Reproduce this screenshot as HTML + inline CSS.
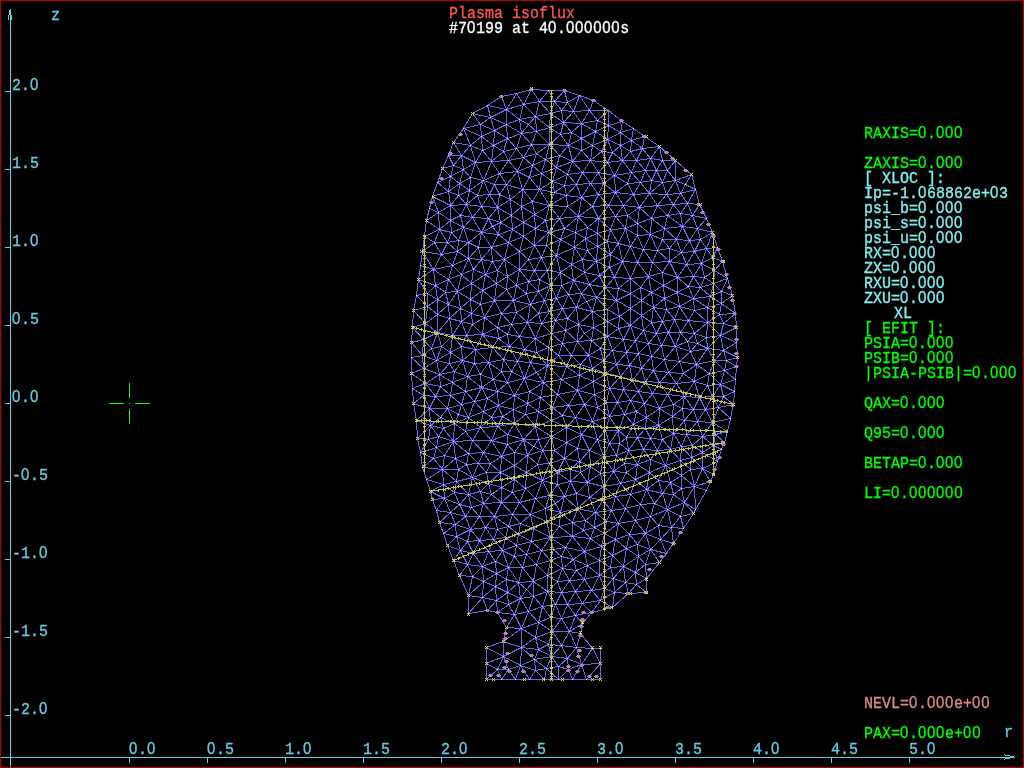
<!DOCTYPE html><html><head><meta charset="utf-8"><style>
html,body{margin:0;padding:0;background:#000;width:1024px;height:768px;overflow:hidden}
.t{position:absolute;font:15px/15px "Liberation Mono",monospace;white-space:pre;transform:scaleY(1.11);transform-origin:0 0;will-change:transform;-webkit-text-stroke:0.3px currentColor}
svg{position:absolute;left:0;top:0}
.t b{font-family:"Liberation Sans",sans-serif;font-weight:normal;letter-spacing:0.66px;line-height:0}
</style></head><body>
<svg width="1024" height="768" shape-rendering="crispEdges">
<rect x="0" y="0" width="1024" height="1" fill="#b40000"/>
<rect x="0" y="767" width="1024" height="1" fill="#b40000"/>
<rect x="0" y="0" width="1" height="768" fill="#b40000"/>
<rect x="1023" y="0" width="1" height="768" fill="#b40000"/>
<rect x="10" y="9" width="1" height="758" fill="#66cce4"/>
<rect x="9" y="10" width="1" height="5" fill="#66cce4"/>
<rect x="8" y="15" width="1" height="5" fill="#66cce4"/>
<rect x="11" y="15" width="1" height="5" fill="#66cce4"/>
<rect x="1" y="757" width="1014" height="1" fill="#66cce4"/>
<rect x="1005" y="755" width="5" height="1" fill="#66cce4"/>
<rect x="1005" y="758" width="5" height="1" fill="#66cce4"/>
<rect x="1010" y="756" width="4" height="1" fill="#66cce4"/>
<rect x="1004" y="754" width="1" height="1" fill="#66cce4"/>
<rect x="1004" y="759" width="1" height="1" fill="#66cce4"/>
<rect x="5" y="91" width="5" height="1" fill="#66cce4"/>
<rect x="5" y="169" width="5" height="1" fill="#66cce4"/>
<rect x="5" y="247" width="5" height="1" fill="#66cce4"/>
<rect x="5" y="325" width="5" height="1" fill="#66cce4"/>
<rect x="5" y="403" width="5" height="1" fill="#66cce4"/>
<rect x="5" y="481" width="5" height="1" fill="#66cce4"/>
<rect x="5" y="559" width="5" height="1" fill="#66cce4"/>
<rect x="5" y="637" width="5" height="1" fill="#66cce4"/>
<rect x="5" y="715" width="5" height="1" fill="#66cce4"/>
<rect x="129" y="758" width="1" height="5" fill="#66cce4"/>
<rect x="207" y="758" width="1" height="5" fill="#66cce4"/>
<rect x="285" y="758" width="1" height="5" fill="#66cce4"/>
<rect x="363" y="758" width="1" height="5" fill="#66cce4"/>
<rect x="441" y="758" width="1" height="5" fill="#66cce4"/>
<rect x="519" y="758" width="1" height="5" fill="#66cce4"/>
<rect x="597" y="758" width="1" height="5" fill="#66cce4"/>
<rect x="675" y="758" width="1" height="5" fill="#66cce4"/>
<rect x="753" y="758" width="1" height="5" fill="#66cce4"/>
<rect x="831" y="758" width="1" height="5" fill="#66cce4"/>
<rect x="909" y="758" width="1" height="5" fill="#66cce4"/>
<rect x="129" y="383" width="1" height="15" fill="#00ff00"/>
<rect x="129" y="409" width="1" height="15" fill="#00ff00"/>
<rect x="109" y="403" width="15" height="1" fill="#00ff00"/>
<rect x="135" y="403" width="15" height="1" fill="#00ff00"/>
<rect x="129" y="403" width="1" height="1" fill="#00ff00"/>
<path d="M574.5 247.5L585.5 238.5M460.5 215.5L466.5 204.5M508.5 567.5L496.5 573.5M620.5 376.5L632.5 380.5M448.5 155.5L453.5 165.5M507.5 276.5L506.5 289.5M482.5 150.5L493.5 145.5M637.5 437.5L626.5 437.5M568.5 405.5L552.5 407.5M644.5 136.5L659.5 146.5M666.5 553.5L659.5 562.5M455.5 458.5L458.5 469.5M552.5 631.5L538.5 622.5M471.5 283.5L485.5 274.5M494.5 300.5L496.5 283.5M461.5 346.5L450.5 352.5M648.5 343.5L661.5 345.5M630.5 278.5L622.5 261.5M487.5 610.5L496.5 600.5M481.5 259.5L485.5 274.5M514.5 423.5L513.5 409.5M603.5 456.5L609.5 443.5M659.5 562.5L646.5 578.5M463.5 169.5L450.5 176.5M439.5 522.5L436.5 510.5M435.5 285.5L437.5 299.5M652.5 393.5L638.5 391.5M646.5 578.5L635.5 572.5M458.5 195.5L448.5 191.5M525.5 414.5L513.5 409.5M593.5 100.5L589.5 110.5M559.5 526.5L572.5 536.5M436.5 510.5L432.5 499.5M448.5 155.5L461.5 155.5M648.5 343.5L635.5 340.5M633.5 424.5L626.5 437.5M581.5 197.5L567.5 206.5M412.5 327.5L423.5 339.5M440.5 386.5L439.5 374.5M694.5 333.5L680.5 332.5M520.5 598.5L526.5 589.5M603.5 183.5L615.5 192.5M572.5 522.5L560.5 512.5M536.5 372.5L543.5 382.5M547.5 575.5L550.5 560.5M605.5 287.5L596.5 297.5M496.5 573.5L482.5 566.5M559.5 526.5L546.5 521.5M457.5 251.5L468.5 258.5M593.5 327.5L591.5 340.5M717.5 461.5L713.5 445.5M624.5 463.5L613.5 471.5M626.5 548.5L612.5 555.5M503.5 656.5L520.5 665.5M693.5 409.5L682.5 408.5M533.5 581.5L522.5 567.5M584.5 404.5L575.5 417.5M650.5 459.5L657.5 450.5M578.5 324.5L576.5 307.5M594.5 527.5L595.5 512.5M488.5 483.5L486.5 472.5M497.5 327.5L507.5 334.5M411.5 373.5L423.5 368.5M604.5 533.5L590.5 538.5M485.5 274.5L473.5 269.5M461.5 321.5L460.5 308.5M564.5 185.5L576.5 184.5M452.5 335.5L437.5 332.5M596.5 261.5L584.5 272.5M498.5 405.5L502.5 416.5M511.5 371.5L524.5 378.5M530.5 514.5L535.5 498.5M673.5 204.5L666.5 194.5M488.5 551.5L495.5 561.5M573.5 559.5L562.5 568.5M483.5 180.5L469.5 190.5M630.5 246.5L643.5 249.5M508.5 242.5L491.5 247.5M593.5 327.5L584.5 333.5M461.5 404.5L458.5 414.5M558.5 666.5L568.5 669.5M507.5 592.5L518.5 582.5M575.5 591.5L567.5 604.5M712.5 232.5L706.5 248.5M641.5 315.5L643.5 330.5M538.5 649.5L534.5 659.5M492.5 347.5L475.5 349.5M526.5 472.5L525.5 488.5M542.5 606.5L528.5 611.5M494.5 300.5L484.5 317.5M561.5 110.5L550.5 113.5M648.5 343.5L638.5 353.5M607.5 336.5L623.5 339.5M546.5 668.5L534.5 659.5M603.5 486.5L615.5 496.5M588.5 355.5L591.5 340.5M465.5 391.5L481.5 387.5M474.5 363.5L488.5 362.5M483.5 411.5L491.5 417.5M608.5 205.5L615.5 192.5M498.5 234.5L481.5 232.5M581.5 664.5L576.5 647.5M535.5 498.5L525.5 488.5M564.5 496.5L555.5 503.5M508.5 526.5L518.5 534.5M472.5 217.5L481.5 206.5M585.5 520.5L583.5 530.5M461.5 321.5L472.5 324.5M693.5 298.5L700.5 287.5M620.5 483.5L635.5 479.5M541.5 173.5L529.5 177.5M723.5 323.5L719.5 314.5M550.5 537.5L559.5 526.5M572.5 161.5L582.5 172.5M530.5 514.5L520.5 523.5M630.5 325.5L618.5 328.5M452.5 265.5L441.5 254.5M470.5 529.5L479.5 516.5M581.5 150.5L592.5 145.5M497.5 207.5L489.5 194.5M533.5 581.5L526.5 589.5M532.5 201.5L522.5 189.5M494.5 130.5L481.5 136.5M680.5 332.5L674.5 319.5M596.5 261.5L610.5 254.5M568.5 669.5L567.5 658.5M508.5 160.5L503.5 151.5M587.5 565.5L573.5 559.5M519.5 336.5L509.5 346.5M677.5 292.5L664.5 298.5M675.5 160.5L691.5 174.5M645.5 533.5L660.5 539.5M630.5 308.5L641.5 315.5M440.5 386.5L425.5 383.5M674.5 319.5L668.5 332.5M502.5 550.5L516.5 545.5M549.5 127.5L549.5 144.5M684.5 420.5L697.5 421.5M552.5 631.5L550.5 617.5M651.5 292.5L648.5 276.5M508.5 242.5L504.5 259.5M433.5 269.5L441.5 254.5M646.5 592.5L628.5 593.5M504.5 259.5L497.5 270.5M519.5 119.5L523.5 104.5M673.5 543.5L671.5 527.5M615.5 496.5L611.5 510.5M552.5 407.5L562.5 415.5M470.5 299.5L457.5 291.5M466.5 335.5L461.5 346.5M646.5 578.5L636.5 584.5M586.5 301.5L581.5 293.5M457.5 251.5L458.5 240.5M487.5 105.5L490.5 117.5M431.5 348.5L423.5 339.5M450.5 352.5L462.5 360.5M430.5 491.5L426.5 479.5M461.5 155.5L475.5 162.5M668.5 372.5L676.5 383.5M694.5 381.5L684.5 396.5M546.5 521.5L533.5 528.5M471.5 283.5L457.5 291.5M547.5 365.5L548.5 347.5M650.5 459.5L649.5 472.5M435.5 285.5L427.5 293.5M454.5 371.5L452.5 382.5M488.5 362.5L475.5 349.5M526.5 293.5L528.5 281.5M652.5 262.5L643.5 249.5M652.5 262.5L657.5 250.5M545.5 508.5L549.5 495.5M664.5 359.5L661.5 345.5M534.5 270.5L528.5 259.5M533.5 581.5L533.5 596.5M482.5 597.5L496.5 600.5M497.5 529.5L505.5 537.5M591.5 590.5L600.5 600.5M693.5 409.5L684.5 396.5M480.5 427.5L491.5 417.5M508.5 160.5L499.5 173.5M566.5 195.5L549.5 205.5M733.5 404.5L723.5 396.5M521.5 647.5L534.5 659.5M475.5 162.5L470.5 145.5M603.5 486.5L620.5 483.5M635.5 572.5L638.5 556.5M507.5 382.5L511.5 371.5M673.5 433.5L684.5 420.5M483.5 180.5L475.5 162.5M620.5 145.5L612.5 152.5M707.5 322.5L723.5 323.5M591.5 612.5L575.5 615.5M497.5 612.5L514.5 614.5M548.5 347.5L562.5 343.5M574.5 247.5L571.5 264.5M460.5 215.5L463.5 227.5M550.5 560.5L561.5 556.5M717.5 247.5L722.5 261.5M606.5 521.5L604.5 533.5M592.5 421.5L581.5 434.5M548.5 347.5L551.5 333.5M557.5 484.5L557.5 472.5M493.5 539.5L479.5 540.5M443.5 428.5L454.5 423.5M633.5 128.5L631.5 140.5M600.5 600.5L614.5 592.5M592.5 648.5L600.5 648.5M523.5 222.5L512.5 229.5M542.5 480.5L549.5 463.5M640.5 504.5L654.5 503.5M426.5 479.5L442.5 469.5M675.5 160.5L675.5 180.5M592.5 421.5L609.5 416.5M600.5 648.5L600.5 663.5M668.5 372.5L683.5 373.5M673.5 494.5L681.5 488.5M508.5 526.5L494.5 516.5M413.5 403.5L412.5 388.5M491.5 247.5L481.5 232.5M630.5 278.5L618.5 288.5M511.5 324.5L507.5 334.5M650.5 438.5L637.5 437.5M473.5 553.5L482.5 566.5M455.5 458.5L444.5 455.5M501.5 502.5L494.5 516.5M618.5 243.5L607.5 241.5M412.5 388.5L411.5 373.5M477.5 195.5L481.5 206.5M565.5 547.5L573.5 559.5M560.5 272.5L561.5 285.5M715.5 434.5L712.5 422.5M639.5 207.5L627.5 215.5M558.5 355.5L562.5 343.5M503.5 359.5L501.5 371.5M466.5 335.5L461.5 321.5M449.5 318.5L437.5 332.5M534.5 245.5L523.5 236.5M657.5 450.5L662.5 439.5M517.5 171.5L529.5 177.5M577.5 341.5L591.5 340.5M560.5 239.5L575.5 232.5M645.5 533.5L635.5 520.5M558.5 679.5L558.5 666.5M490.5 117.5L480.5 124.5M468.5 453.5L455.5 458.5M582.5 603.5L567.5 604.5M578.5 324.5L567.5 318.5M527.5 322.5L511.5 324.5M690.5 351.5L697.5 343.5M514.5 452.5L527.5 455.5M441.5 346.5L436.5 360.5M648.5 343.5L656.5 333.5M662.5 321.5L666.5 309.5M525.5 414.5L527.5 403.5M596.5 261.5L587.5 250.5M451.5 232.5L447.5 242.5M495.5 586.5L483.5 581.5M447.5 408.5L458.5 414.5M572.5 522.5L585.5 520.5M673.5 433.5L658.5 425.5M606.5 373.5L603.5 360.5M442.5 469.5L433.5 458.5M542.5 480.5L525.5 488.5M567.5 174.5L556.5 167.5M425.5 383.5L435.5 396.5M641.5 315.5L641.5 300.5M460.5 215.5L450.5 220.5M638.5 556.5L650.5 549.5M452.5 265.5L461.5 274.5M706.5 218.5L697.5 228.5M578.5 216.5L598.5 218.5M657.5 250.5L643.5 249.5M687.5 341.5L697.5 343.5M564.5 458.5L554.5 450.5M585.5 520.5L595.5 512.5M465.5 391.5L450.5 395.5M572.5 536.5L583.5 530.5M453.5 142.5L461.5 155.5M467.5 541.5L479.5 540.5M643.5 330.5L630.5 325.5M717.5 461.5L702.5 452.5M508.5 567.5L506.5 579.5M600.5 348.5L591.5 340.5M721.5 303.5L721.5 291.5M657.5 205.5L667.5 215.5M521.5 628.5L521.5 647.5M585.5 238.5L597.5 246.5M578.5 216.5L575.5 232.5M608.5 205.5L598.5 218.5M707.5 322.5L719.5 314.5M688.5 320.5L680.5 332.5M684.5 396.5L682.5 408.5M506.5 289.5L513.5 300.5M564.5 185.5L552.5 181.5M620.5 376.5L616.5 364.5M549.5 127.5L550.5 113.5M658.5 425.5L659.5 408.5M552.5 631.5L569.5 631.5M521.5 628.5L538.5 622.5M690.5 469.5L691.5 457.5M618.5 243.5L630.5 246.5M607.5 336.5L591.5 340.5M525.5 414.5L538.5 411.5M651.5 356.5L653.5 370.5M508.5 604.5L507.5 592.5M603.5 486.5L587.5 482.5M501.5 502.5L501.5 487.5M539.5 101.5L550.5 113.5M463.5 128.5L470.5 145.5M619.5 316.5L630.5 325.5M459.5 183.5L450.5 176.5M608.5 110.5L608.5 125.5M565.5 330.5L567.5 318.5M606.5 373.5L593.5 381.5M488.5 551.5L482.5 566.5M449.5 318.5L437.5 314.5M717.5 247.5L712.5 257.5M561.5 110.5L554.5 101.5M517.5 171.5L506.5 184.5M571.5 355.5L580.5 364.5M589.5 284.5L581.5 293.5M649.5 193.5L640.5 182.5M564.5 90.5L554.5 101.5M584.5 579.5L569.5 580.5M613.5 471.5L616.5 455.5M623.5 205.5L627.5 215.5M428.5 439.5L436.5 447.5M447.5 408.5L454.5 423.5M511.5 215.5L500.5 222.5M483.5 452.5L501.5 456.5M516.5 545.5L505.5 537.5M448.5 191.5L450.5 176.5M727.5 278.5L732.5 295.5M467.5 541.5L460.5 550.5M656.5 170.5L662.5 182.5M536.5 352.5L548.5 347.5M501.5 487.5L512.5 492.5M565.5 547.5L553.5 549.5M508.5 567.5L495.5 561.5M624.5 463.5L616.5 455.5M507.5 138.5L521.5 133.5M450.5 512.5L465.5 516.5M727.5 278.5L721.5 291.5M481.5 136.5L480.5 124.5M628.5 450.5L637.5 437.5M531.5 144.5L549.5 144.5M584.5 551.5L590.5 538.5M712.5 422.5L697.5 421.5M551.5 333.5L562.5 343.5M659.5 408.5L673.5 404.5M548.5 644.5L538.5 649.5M507.5 592.5L495.5 586.5M547.5 365.5L536.5 352.5M588.5 355.5L580.5 364.5M538.5 291.5L550.5 285.5M651.5 292.5L653.5 307.5M702.5 436.5L715.5 434.5M487.5 105.5L501.5 96.5M625.5 582.5L636.5 584.5M627.5 183.5L615.5 192.5M473.5 553.5L479.5 540.5M431.5 348.5L436.5 360.5M411.5 357.5L411.5 342.5M582.5 603.5L575.5 615.5M557.5 581.5L562.5 568.5M638.5 556.5L645.5 564.5M514.5 556.5L508.5 567.5M480.5 304.5L470.5 299.5M692.5 445.5L686.5 434.5M597.5 233.5L598.5 218.5M523.5 104.5L539.5 101.5M630.5 400.5L617.5 402.5M650.5 158.5L662.5 160.5M534.5 270.5L539.5 279.5M547.5 270.5L560.5 272.5M497.5 327.5L484.5 317.5M470.5 177.5L483.5 180.5M448.5 279.5L445.5 292.5M664.5 228.5L667.5 215.5M680.5 193.5L685.5 184.5M531.5 89.5L516.5 93.5M545.5 508.5L560.5 512.5M650.5 459.5L665.5 465.5M598.5 218.5L615.5 216.5M613.5 471.5L626.5 472.5M659.5 382.5L645.5 381.5M603.5 456.5L589.5 450.5M722.5 261.5L714.5 270.5M514.5 452.5L501.5 456.5M628.5 450.5L619.5 443.5M516.5 148.5L523.5 157.5M528.5 611.5L538.5 622.5M519.5 119.5L506.5 109.5M690.5 469.5L694.5 486.5M694.5 251.5L700.5 239.5M594.5 527.5L585.5 520.5M566.5 195.5L567.5 206.5M555.5 320.5L565.5 330.5M448.5 279.5L435.5 285.5M638.5 353.5L635.5 340.5M547.5 365.5L558.5 355.5M702.5 452.5L702.5 468.5M624.5 463.5L626.5 472.5M472.5 217.5L488.5 218.5M575.5 591.5L569.5 580.5M628.5 450.5L626.5 437.5M587.5 227.5L578.5 216.5M577.5 508.5L576.5 493.5M514.5 479.5L514.5 465.5M607.5 309.5L616.5 300.5M565.5 547.5L572.5 536.5M454.5 423.5L458.5 414.5M735.5 379.5L734.5 391.5M478.5 463.5L468.5 453.5M565.5 547.5L584.5 551.5M576.5 570.5L573.5 559.5M668.5 372.5L664.5 359.5M482.5 334.5L475.5 349.5M473.5 553.5L460.5 550.5M447.5 545.5L456.5 536.5M662.5 182.5L651.5 180.5M630.5 278.5L648.5 276.5M533.5 581.5L518.5 582.5M530.5 514.5L533.5 528.5M519.5 269.5L516.5 285.5M622.5 261.5L610.5 254.5M585.5 238.5L597.5 233.5M542.5 480.5L549.5 495.5M561.5 618.5L567.5 604.5M538.5 313.5L544.5 300.5M659.5 562.5L645.5 564.5M619.5 316.5L607.5 309.5M468.5 453.5L472.5 440.5M416.5 295.5L427.5 306.5M577.5 341.5L565.5 330.5M456.5 536.5L460.5 550.5M623.5 205.5L639.5 207.5M603.5 456.5L613.5 471.5M707.5 322.5L707.5 307.5M659.5 408.5L672.5 416.5M627.5 183.5L631.5 172.5M651.5 322.5L653.5 307.5M626.5 352.5L612.5 350.5M456.5 536.5L455.5 524.5M635.5 572.5L636.5 584.5M541.5 173.5L539.5 189.5M612.5 555.5L623.5 566.5M449.5 318.5L448.5 304.5M609.5 388.5L617.5 402.5M500.5 472.5L501.5 456.5M482.5 290.5L485.5 274.5M465.5 391.5L452.5 382.5M577.5 341.5L588.5 355.5M488.5 218.5L481.5 232.5M662.5 493.5L673.5 494.5M503.5 641.5L521.5 647.5M627.5 183.5L614.5 175.5M568.5 294.5L576.5 307.5M696.5 364.5L690.5 351.5M604.5 588.5L591.5 590.5M488.5 551.5L479.5 540.5M508.5 604.5L520.5 598.5M486.5 472.5L472.5 477.5M604.5 588.5L613.5 578.5M675.5 180.5L666.5 194.5M679.5 306.5L694.5 310.5M507.5 592.5L520.5 598.5M644.5 136.5L631.5 140.5M470.5 529.5L479.5 540.5M622.5 121.5L633.5 128.5M577.5 508.5L572.5 522.5M453.5 165.5L450.5 176.5M706.5 248.5L701.5 263.5M453.5 441.5L436.5 447.5M497.5 426.5L491.5 417.5M657.5 250.5L650.5 234.5M622.5 160.5L620.5 145.5M673.5 543.5L666.5 553.5M606.5 521.5L595.5 512.5M572.5 161.5L567.5 174.5M667.5 509.5L654.5 503.5M684.5 502.5L680.5 516.5M610.5 254.5L607.5 241.5M605.5 430.5L609.5 443.5M443.5 533.5L439.5 522.5M620.5 145.5L607.5 139.5M590.5 466.5L587.5 482.5M597.5 120.5L608.5 125.5M549.5 144.5L536.5 131.5M517.5 361.5L524.5 378.5M573.5 111.5L567.5 102.5M635.5 572.5L645.5 564.5M577.5 390.5L557.5 394.5M497.5 426.5L502.5 416.5M494.5 130.5L507.5 138.5M531.5 541.5L516.5 545.5M681.5 252.5L689.5 240.5M577.5 508.5L595.5 512.5M600.5 348.5L588.5 355.5M555.5 320.5L567.5 318.5M538.5 291.5L528.5 281.5M620.5 376.5L609.5 388.5M591.5 612.5L582.5 603.5M498.5 405.5L513.5 409.5M598.5 194.5L603.5 183.5M431.5 348.5L437.5 332.5M609.5 416.5L618.5 430.5M536.5 564.5L526.5 554.5M482.5 290.5L480.5 304.5M542.5 606.5L550.5 617.5M449.5 318.5L460.5 308.5M643.5 449.5L637.5 464.5M578.5 324.5L592.5 311.5M439.5 374.5L449.5 363.5M523.5 104.5L506.5 109.5M466.5 335.5L482.5 334.5M603.5 486.5L602.5 500.5M429.5 408.5L447.5 408.5M651.5 356.5L661.5 345.5M532.5 201.5L549.5 205.5M695.5 189.5L699.5 204.5M470.5 529.5L455.5 524.5M568.5 145.5L571.5 132.5M428.5 439.5L430.5 425.5M584.5 404.5L597.5 407.5M545.5 159.5L536.5 153.5M597.5 120.5L581.5 123.5M637.5 437.5L645.5 428.5M626.5 548.5L629.5 534.5M488.5 483.5L472.5 477.5M511.5 371.5L501.5 371.5M699.5 204.5L706.5 218.5M475.5 349.5L462.5 360.5M612.5 607.5L591.5 612.5M457.5 251.5L468.5 242.5M481.5 387.5L487.5 398.5M461.5 155.5L463.5 169.5M712.5 232.5L697.5 228.5M568.5 145.5L560.5 134.5M453.5 560.5L467.5 564.5M697.5 228.5L682.5 226.5M546.5 245.5L534.5 245.5M591.5 612.5L582.5 623.5M422.5 467.5L420.5 452.5M523.5 439.5L514.5 423.5M531.5 144.5L536.5 131.5M542.5 606.5L533.5 596.5M502.5 550.5L495.5 561.5M694.5 381.5L699.5 397.5M584.5 551.5L573.5 559.5M614.5 175.5L615.5 192.5M539.5 101.5L554.5 101.5M723.5 323.5L720.5 335.5M519.5 269.5L528.5 281.5M459.5 504.5L471.5 507.5M420.5 452.5L417.5 438.5M576.5 184.5L582.5 172.5M482.5 150.5L481.5 136.5M651.5 356.5L641.5 368.5M594.5 527.5L606.5 521.5M724.5 442.5L715.5 434.5M488.5 483.5L480.5 491.5M570.5 481.5L570.5 469.5M658.5 525.5L650.5 516.5M417.5 438.5L428.5 439.5M625.5 228.5L615.5 216.5M699.5 397.5L712.5 396.5M620.5 483.5L615.5 496.5M571.5 355.5L577.5 341.5M597.5 439.5L605.5 430.5M501.5 313.5L494.5 300.5M528.5 611.5L533.5 596.5M693.5 409.5L699.5 397.5M486.5 663.5L503.5 656.5M458.5 195.5L466.5 204.5M568.5 145.5L549.5 144.5M580.5 472.5L570.5 469.5M592.5 206.5L598.5 194.5M702.5 468.5L691.5 457.5M658.5 480.5L646.5 489.5M626.5 352.5L616.5 364.5M480.5 374.5L467.5 376.5M536.5 564.5L522.5 567.5M612.5 555.5L599.5 560.5M600.5 663.5L581.5 664.5M622.5 121.5L608.5 125.5M528.5 259.5L541.5 257.5M520.5 665.5L521.5 647.5M477.5 195.5L466.5 204.5M680.5 460.5L681.5 446.5M565.5 547.5L561.5 556.5M722.5 261.5L712.5 257.5M630.5 400.5L644.5 403.5M629.5 365.5L632.5 380.5M577.5 341.5L562.5 343.5M578.5 216.5L567.5 206.5M666.5 309.5L679.5 306.5M547.5 591.5L557.5 581.5M605.5 287.5L616.5 300.5M482.5 334.5L498.5 338.5M497.5 612.5L508.5 604.5M692.5 445.5L681.5 446.5M651.5 218.5L650.5 234.5M670.5 449.5L657.5 450.5M645.5 170.5L640.5 182.5M623.5 339.5L618.5 328.5M675.5 346.5L690.5 351.5M491.5 440.5L501.5 456.5M637.5 262.5L630.5 278.5M658.5 425.5L662.5 439.5M675.5 180.5L680.5 193.5M606.5 402.5L617.5 402.5M697.5 228.5L700.5 239.5M441.5 346.5L450.5 352.5M583.5 530.5L590.5 538.5M425.5 383.5L423.5 368.5M488.5 362.5L493.5 379.5M567.5 604.5L561.5 592.5M481.5 259.5L478.5 247.5M518.5 582.5L526.5 589.5M659.5 382.5L667.5 394.5M732.5 295.5L721.5 291.5M557.5 472.5L570.5 469.5M496.5 573.5L495.5 586.5M690.5 351.5L707.5 348.5M667.5 509.5L680.5 516.5M669.5 261.5L677.5 277.5M614.5 175.5L631.5 172.5M442.5 469.5L458.5 469.5M646.5 489.5L654.5 503.5M707.5 348.5L720.5 335.5M540.5 397.5L557.5 394.5M488.5 483.5L501.5 487.5M584.5 579.5L576.5 570.5M651.5 292.5L664.5 298.5M584.5 404.5L594.5 394.5M468.5 258.5L461.5 274.5M552.5 631.5L561.5 645.5M620.5 132.5L620.5 145.5M618.5 243.5L610.5 229.5M507.5 138.5L506.5 124.5M436.5 447.5L444.5 455.5M579.5 375.5L593.5 381.5M474.5 401.5L481.5 387.5M701.5 263.5L693.5 276.5M568.5 294.5L556.5 298.5M606.5 521.5L611.5 510.5M696.5 364.5L679.5 361.5M545.5 508.5L535.5 498.5M702.5 468.5L694.5 486.5M556.5 298.5L561.5 285.5M567.5 174.5L582.5 172.5M645.5 170.5L651.5 180.5M551.5 436.5L554.5 450.5M523.5 222.5L534.5 214.5M614.5 175.5L607.5 162.5M679.5 361.5L683.5 373.5M470.5 177.5L459.5 183.5M541.5 173.5L556.5 167.5M675.5 346.5L661.5 345.5M453.5 441.5L444.5 455.5M706.5 218.5L712.5 232.5M666.5 309.5L653.5 307.5M534.5 659.5L551.5 656.5M662.5 493.5L646.5 489.5M472.5 217.5L463.5 227.5M712.5 232.5L717.5 247.5M603.5 360.5L612.5 350.5M582.5 623.5L580.5 633.5M630.5 278.5L630.5 293.5M492.5 261.5L485.5 274.5M635.5 479.5L630.5 494.5M568.5 405.5L562.5 415.5M576.5 184.5L581.5 197.5M468.5 242.5L458.5 240.5M580.5 633.5L592.5 648.5M549.5 463.5L557.5 472.5M584.5 551.5L599.5 560.5M417.5 438.5L416.5 420.5M598.5 218.5L610.5 229.5M577.5 448.5L589.5 450.5M625.5 508.5L640.5 504.5M416.5 420.5L413.5 403.5M488.5 483.5L491.5 494.5M650.5 158.5L636.5 160.5M452.5 335.5L466.5 335.5M548.5 232.5L559.5 218.5M575.5 591.5L584.5 579.5M489.5 194.5L494.5 184.5M506.5 184.5L494.5 184.5M497.5 391.5L493.5 379.5M427.5 306.5L425.5 323.5M630.5 308.5L616.5 300.5M473.5 269.5L461.5 274.5M697.5 421.5L705.5 409.5M542.5 450.5L527.5 455.5M555.5 604.5L561.5 618.5M547.5 365.5L530.5 362.5M576.5 307.5L562.5 308.5M481.5 259.5L491.5 247.5M649.5 193.5L639.5 207.5M425.5 323.5L423.5 339.5M468.5 494.5L471.5 507.5M662.5 493.5L667.5 509.5M574.5 247.5L582.5 259.5M620.5 132.5L608.5 125.5M675.5 180.5L662.5 182.5M686.5 264.5L669.5 261.5M684.5 396.5L667.5 394.5M662.5 160.5L667.5 170.5M662.5 321.5L656.5 333.5M485.5 527.5L479.5 540.5M736.5 327.5L723.5 323.5M572.5 161.5L559.5 155.5M422.5 251.5L441.5 254.5M571.5 264.5L573.5 280.5M630.5 400.5L624.5 414.5M547.5 365.5L536.5 372.5M532.5 165.5L545.5 159.5M477.5 195.5L489.5 194.5M707.5 348.5L697.5 343.5M479.5 516.5L494.5 516.5M471.5 283.5L470.5 299.5M423.5 368.5L436.5 360.5M487.5 105.5L506.5 109.5M710.5 296.5L721.5 291.5M422.5 467.5L433.5 458.5M736.5 327.5L736.5 342.5M669.5 261.5L669.5 248.5M547.5 365.5L561.5 379.5M534.5 245.5L528.5 259.5M603.5 456.5L616.5 455.5M493.5 145.5L503.5 151.5M572.5 679.5L558.5 679.5M644.5 403.5L638.5 391.5M611.5 510.5L595.5 512.5M684.5 420.5L686.5 434.5M622.5 261.5L618.5 243.5M732.5 295.5L721.5 303.5M412.5 327.5L413.5 310.5M693.5 298.5L694.5 310.5M616.5 455.5L609.5 443.5M551.5 436.5L551.5 420.5M609.5 267.5L599.5 275.5M439.5 522.5L455.5 524.5M457.5 291.5L445.5 292.5M576.5 647.5L569.5 631.5M413.5 310.5L416.5 295.5M635.5 572.5L623.5 566.5M568.5 294.5L561.5 285.5M658.5 425.5L672.5 416.5M584.5 579.5L599.5 575.5M459.5 575.5L467.5 564.5M597.5 233.5L597.5 246.5M645.5 533.5L650.5 549.5M637.5 262.5L652.5 262.5M680.5 213.5L682.5 226.5M540.5 397.5L543.5 382.5M706.5 218.5L692.5 215.5M461.5 346.5L475.5 349.5M707.5 307.5L694.5 310.5M452.5 382.5L467.5 376.5M629.5 365.5L641.5 368.5M483.5 411.5L480.5 427.5M483.5 180.5L499.5 173.5M643.5 330.5L656.5 333.5M438.5 212.5L450.5 205.5M531.5 89.5L523.5 104.5M665.5 465.5L657.5 450.5M571.5 355.5L558.5 355.5M482.5 334.5L492.5 347.5M471.5 313.5L461.5 321.5M444.5 498.5L454.5 492.5M587.5 482.5L600.5 473.5M433.5 458.5L444.5 455.5M601.5 151.5L592.5 145.5M672.5 416.5L673.5 404.5M422.5 355.5L423.5 339.5M453.5 142.5L470.5 145.5M490.5 117.5L506.5 109.5M501.5 313.5L511.5 324.5M564.5 185.5L554.5 192.5M688.5 286.5L677.5 277.5M455.5 524.5L465.5 516.5M439.5 374.5L436.5 360.5M675.5 346.5L679.5 361.5M614.5 592.5L625.5 582.5M418.5 279.5L433.5 269.5M662.5 182.5L649.5 193.5M433.5 269.5L435.5 285.5M454.5 371.5L439.5 374.5M447.5 242.5L441.5 254.5M659.5 408.5L646.5 417.5M650.5 516.5L635.5 520.5M592.5 648.5L600.5 663.5M480.5 427.5L465.5 431.5M623.5 205.5L633.5 194.5M577.5 390.5L584.5 404.5M452.5 265.5L468.5 258.5M566.5 427.5L575.5 417.5M651.5 292.5L640.5 287.5M443.5 428.5L430.5 425.5M548.5 644.5L561.5 645.5M603.5 360.5L616.5 364.5M504.5 259.5L519.5 251.5M676.5 239.5L689.5 240.5M520.5 665.5L508.5 669.5M623.5 389.5L638.5 391.5M629.5 365.5L638.5 353.5M699.5 397.5L705.5 409.5M467.5 376.5L462.5 360.5M452.5 382.5L440.5 386.5M472.5 440.5L480.5 427.5M538.5 439.5L533.5 446.5M527.5 322.5L535.5 338.5M684.5 396.5L699.5 397.5M681.5 488.5L694.5 486.5M579.5 461.5L589.5 450.5M541.5 323.5L535.5 338.5M547.5 591.5L547.5 575.5M486.5 647.5L503.5 656.5M620.5 483.5L626.5 472.5M605.5 287.5L618.5 288.5M428.5 439.5L438.5 436.5M442.5 469.5L444.5 455.5M659.5 146.5L642.5 148.5M542.5 450.5L554.5 450.5M596.5 297.5L586.5 301.5M645.5 381.5L652.5 393.5M590.5 160.5L607.5 162.5M514.5 423.5L507.5 434.5M542.5 480.5L557.5 472.5M432.5 196.5L450.5 205.5M616.5 300.5L618.5 288.5M468.5 242.5L463.5 227.5M639.5 207.5L657.5 205.5M615.5 539.5L604.5 533.5M642.5 148.5L636.5 160.5M692.5 215.5L687.5 203.5M549.5 463.5L564.5 458.5M579.5 375.5L566.5 366.5M679.5 361.5L664.5 359.5M712.5 396.5L720.5 384.5M681.5 475.5L690.5 469.5M638.5 556.5L637.5 544.5M566.5 195.5L581.5 197.5M450.5 205.5L448.5 191.5M653.5 307.5L641.5 300.5M531.5 89.5L539.5 101.5M535.5 116.5L549.5 127.5M501.5 502.5L483.5 503.5M625.5 228.5L610.5 229.5M523.5 222.5L523.5 236.5M643.5 449.5L657.5 450.5M436.5 510.5L450.5 512.5M737.5 357.5L736.5 366.5M561.5 645.5L551.5 656.5M459.5 183.5L448.5 191.5M465.5 391.5L474.5 401.5M508.5 604.5L496.5 600.5M527.5 322.5L516.5 312.5M626.5 548.5L638.5 556.5M723.5 350.5L707.5 348.5M718.5 407.5L705.5 409.5M548.5 90.5L539.5 101.5M517.5 171.5L532.5 165.5M736.5 366.5L735.5 379.5M519.5 336.5L507.5 334.5M521.5 628.5L528.5 611.5M544.5 679.5L529.5 679.5M535.5 338.5L524.5 349.5M507.5 592.5L496.5 600.5M614.5 277.5L599.5 275.5M536.5 352.5L530.5 362.5M529.5 679.5L515.5 679.5M566.5 442.5L581.5 434.5M416.5 295.5L418.5 279.5M491.5 440.5L480.5 427.5M608.5 110.5L589.5 110.5M413.5 310.5L427.5 306.5M715.5 434.5L713.5 445.5M572.5 522.5L572.5 536.5M504.5 259.5L492.5 261.5M501.5 313.5L497.5 327.5M673.5 494.5L684.5 502.5M418.5 279.5L420.5 265.5M691.5 174.5L685.5 184.5M680.5 193.5L687.5 203.5M603.5 486.5L613.5 471.5M656.5 333.5L668.5 332.5M581.5 138.5L581.5 150.5M597.5 439.5L581.5 434.5M498.5 234.5L512.5 229.5M690.5 351.5L687.5 341.5M609.5 416.5L605.5 430.5M437.5 299.5L437.5 314.5M607.5 321.5L618.5 328.5M630.5 325.5L635.5 340.5M542.5 480.5L535.5 498.5M618.5 523.5L615.5 539.5M498.5 405.5L491.5 417.5M516.5 545.5L518.5 534.5M616.5 300.5L596.5 297.5M561.5 556.5L562.5 568.5M508.5 567.5L518.5 582.5M662.5 272.5L663.5 285.5M429.5 408.5L440.5 417.5M479.5 516.5L471.5 507.5M500.5 472.5L514.5 465.5M587.5 565.5L584.5 579.5M620.5 132.5L607.5 139.5M644.5 403.5L659.5 408.5M714.5 360.5L723.5 350.5M670.5 449.5L680.5 460.5M429.5 408.5L435.5 396.5M713.5 474.5L702.5 468.5M660.5 539.5L658.5 525.5M412.5 388.5L425.5 383.5M589.5 450.5L581.5 434.5M601.5 151.5L612.5 152.5M519.5 336.5L535.5 338.5M520.5 523.5L512.5 514.5M453.5 441.5L454.5 423.5M564.5 228.5L575.5 232.5M506.5 289.5L516.5 285.5M436.5 447.5L433.5 458.5M549.5 144.5L536.5 153.5M670.5 449.5L665.5 465.5M522.5 189.5L529.5 177.5M572.5 161.5L590.5 160.5M623.5 339.5L626.5 352.5M432.5 499.5L444.5 498.5M440.5 386.5L450.5 395.5M442.5 469.5L443.5 484.5M642.5 148.5L631.5 140.5M694.5 381.5L709.5 373.5M448.5 304.5L445.5 292.5M681.5 475.5L694.5 486.5M550.5 560.5L562.5 568.5M539.5 189.5L554.5 192.5M503.5 641.5L506.5 627.5M623.5 389.5L632.5 380.5M522.5 567.5L526.5 554.5M633.5 128.5L620.5 132.5M592.5 206.5L598.5 218.5M652.5 393.5L667.5 394.5M609.5 416.5L597.5 407.5M577.5 448.5L566.5 442.5M514.5 395.5L529.5 391.5M459.5 504.5L450.5 512.5M622.5 261.5L630.5 246.5M673.5 494.5L670.5 482.5M426.5 220.5L438.5 212.5M633.5 194.5L640.5 182.5M618.5 430.5L605.5 430.5M514.5 479.5L512.5 492.5M454.5 371.5L449.5 363.5M463.5 128.5L481.5 136.5M607.5 162.5L612.5 152.5M609.5 267.5L614.5 277.5M658.5 525.5L671.5 527.5M501.5 313.5L513.5 300.5M688.5 320.5L674.5 319.5M436.5 447.5L438.5 436.5M550.5 537.5L533.5 528.5M651.5 292.5L641.5 300.5M559.5 155.5L556.5 167.5M581.5 123.5L573.5 111.5M547.5 575.5L562.5 568.5M592.5 648.5L576.5 647.5M532.5 165.5L529.5 177.5M584.5 333.5L591.5 340.5M491.5 247.5L492.5 261.5M650.5 158.5L645.5 170.5M535.5 426.5L538.5 439.5M620.5 145.5L631.5 140.5M608.5 205.5L615.5 216.5M555.5 604.5L550.5 617.5M520.5 665.5L534.5 659.5M453.5 441.5L438.5 436.5M519.5 119.5L528.5 124.5M422.5 355.5L436.5 360.5M546.5 245.5L548.5 232.5M658.5 480.5L665.5 465.5M653.5 370.5L641.5 368.5M624.5 463.5L637.5 464.5M658.5 525.5L667.5 509.5M531.5 144.5L536.5 153.5M632.5 380.5L638.5 391.5M578.5 216.5L559.5 218.5M528.5 124.5L536.5 131.5M578.5 324.5L565.5 330.5M593.5 327.5L607.5 321.5M609.5 267.5L596.5 261.5M468.5 595.5L482.5 597.5M723.5 396.5L720.5 384.5M420.5 452.5L433.5 458.5M669.5 261.5L657.5 250.5M523.5 439.5L527.5 455.5M494.5 300.5L480.5 304.5M659.5 382.5L652.5 393.5M686.5 264.5L701.5 263.5M578.5 216.5L564.5 228.5M735.5 379.5L724.5 370.5M497.5 391.5L507.5 382.5M735.5 313.5L721.5 303.5M470.5 299.5L460.5 308.5M612.5 350.5L616.5 364.5M541.5 323.5L551.5 333.5M652.5 262.5L669.5 261.5M461.5 155.5L470.5 145.5M577.5 508.5L589.5 497.5M675.5 346.5L687.5 341.5M609.5 416.5L606.5 402.5M521.5 206.5L532.5 201.5M472.5 576.5L482.5 566.5M618.5 523.5L604.5 533.5M426.5 479.5L422.5 467.5M619.5 443.5L618.5 430.5M694.5 333.5L706.5 337.5M515.5 679.5L508.5 669.5M514.5 556.5L522.5 567.5M646.5 592.5L636.5 584.5M662.5 272.5L669.5 261.5M633.5 424.5L636.5 411.5M595.5 131.5L597.5 120.5M727.5 431.5L715.5 434.5M645.5 428.5L646.5 417.5M458.5 195.5L459.5 183.5M688.5 320.5L679.5 306.5M549.5 205.5L567.5 206.5M420.5 452.5L428.5 439.5M555.5 604.5L567.5 604.5M437.5 299.5L427.5 293.5M536.5 564.5L541.5 550.5M441.5 346.5L452.5 335.5M452.5 265.5L448.5 279.5M547.5 270.5L556.5 255.5M598.5 172.5L603.5 183.5M651.5 218.5L639.5 207.5M662.5 321.5L651.5 322.5M676.5 239.5L662.5 239.5M572.5 536.5L590.5 538.5M576.5 307.5L586.5 301.5M539.5 189.5L529.5 177.5M471.5 283.5L482.5 290.5M475.5 162.5L491.5 161.5M507.5 382.5L514.5 395.5M589.5 284.5L599.5 275.5M578.5 216.5L581.5 197.5M597.5 120.5L589.5 110.5M549.5 205.5L534.5 214.5M425.5 323.5L437.5 332.5M684.5 420.5L682.5 408.5M420.5 265.5L433.5 269.5M636.5 160.5L630.5 151.5M722.5 261.5L727.5 278.5M536.5 564.5L533.5 581.5M526.5 293.5L530.5 304.5M676.5 239.5L681.5 252.5M442.5 168.5L453.5 165.5M472.5 576.5L467.5 564.5M680.5 213.5L673.5 204.5M543.5 382.5L529.5 391.5M630.5 278.5L640.5 287.5M619.5 443.5L616.5 455.5M681.5 252.5L669.5 261.5M591.5 590.5L582.5 603.5M497.5 612.5L496.5 600.5M411.5 373.5L411.5 357.5M576.5 647.5L561.5 645.5M529.5 391.5L527.5 403.5M520.5 598.5L514.5 614.5M665.5 465.5L680.5 460.5M545.5 220.5L535.5 228.5M474.5 401.5L487.5 398.5M706.5 337.5L720.5 335.5M514.5 395.5L524.5 378.5M579.5 95.5L589.5 110.5M564.5 458.5L570.5 469.5M526.5 554.5L541.5 550.5M462.5 360.5L449.5 363.5M645.5 533.5L650.5 516.5M411.5 342.5L423.5 339.5M437.5 182.5L450.5 176.5M549.5 495.5L557.5 484.5M556.5 298.5L544.5 300.5M426.5 220.5L439.5 229.5M503.5 641.5L521.5 628.5M514.5 452.5L523.5 439.5M704.5 277.5L713.5 283.5M681.5 475.5L681.5 488.5M417.5 438.5L430.5 425.5M677.5 292.5L693.5 298.5M443.5 428.5L438.5 436.5M498.5 405.5L487.5 398.5M503.5 656.5L521.5 647.5M651.5 292.5L663.5 285.5M552.5 181.5L554.5 192.5M673.5 433.5L686.5 434.5M492.5 347.5L498.5 338.5M452.5 335.5L450.5 352.5M517.5 171.5L523.5 157.5M658.5 425.5L646.5 417.5M471.5 283.5L461.5 274.5M507.5 138.5L503.5 151.5M494.5 300.5L482.5 290.5M555.5 320.5L549.5 311.5M651.5 218.5L637.5 223.5M710.5 296.5L700.5 287.5M717.5 461.5L702.5 468.5M623.5 339.5L630.5 325.5M659.5 408.5L652.5 393.5M577.5 341.5L584.5 333.5M453.5 441.5L472.5 440.5M706.5 490.5L694.5 486.5M662.5 321.5L674.5 319.5M493.5 539.5L485.5 527.5M524.5 349.5L530.5 362.5M592.5 368.5L580.5 364.5M686.5 264.5L693.5 276.5M517.5 361.5L524.5 349.5M422.5 355.5L431.5 348.5M662.5 239.5L664.5 228.5M550.5 285.5L561.5 285.5M542.5 450.5L537.5 464.5M497.5 426.5L480.5 427.5M609.5 388.5L593.5 381.5M518.5 582.5L506.5 579.5M526.5 293.5L513.5 300.5M474.5 363.5L467.5 376.5M425.5 323.5L437.5 314.5M542.5 480.5L557.5 484.5M593.5 327.5L578.5 324.5M411.5 357.5L422.5 355.5M547.5 591.5L533.5 596.5M523.5 222.5L511.5 215.5M684.5 502.5L694.5 486.5M438.5 212.5L450.5 220.5M646.5 489.5L630.5 494.5M547.5 575.5L557.5 581.5M588.5 355.5L592.5 368.5M695.5 189.5L685.5 184.5M535.5 228.5L534.5 214.5M482.5 290.5L470.5 299.5M563.5 122.5L573.5 111.5M496.5 283.5L485.5 274.5M520.5 598.5L518.5 582.5M568.5 294.5L581.5 293.5M468.5 494.5L483.5 503.5M483.5 411.5L487.5 398.5M606.5 402.5L609.5 388.5M688.5 286.5L677.5 292.5M468.5 417.5L458.5 414.5M609.5 267.5L622.5 261.5M723.5 396.5L712.5 396.5M549.5 205.5L554.5 192.5M693.5 513.5L684.5 502.5M468.5 258.5L473.5 269.5M684.5 396.5L673.5 404.5M459.5 504.5L454.5 492.5M662.5 493.5L654.5 503.5M690.5 469.5L680.5 460.5M710.5 481.5L702.5 468.5M570.5 481.5L580.5 472.5M706.5 337.5L697.5 343.5M663.5 285.5L677.5 277.5M694.5 381.5L676.5 383.5M625.5 228.5L618.5 243.5M508.5 242.5L523.5 236.5M530.5 514.5L519.5 502.5M411.5 373.5L425.5 383.5M575.5 591.5L591.5 590.5M712.5 422.5L705.5 409.5M666.5 553.5L660.5 539.5M472.5 576.5L483.5 581.5M520.5 523.5L518.5 534.5M529.5 679.5L520.5 665.5M713.5 283.5L714.5 270.5M587.5 482.5L576.5 493.5M592.5 421.5L584.5 404.5M606.5 402.5L597.5 407.5M501.5 456.5L490.5 463.5M584.5 272.5L599.5 275.5M451.5 232.5L458.5 240.5M508.5 526.5L520.5 523.5M487.5 610.5L482.5 597.5M737.5 357.5L723.5 350.5M732.5 295.5L735.5 313.5M579.5 375.5L592.5 368.5M443.5 484.5L454.5 492.5M450.5 205.5L460.5 215.5M735.5 313.5L736.5 327.5M600.5 679.5L586.5 679.5M483.5 180.5L489.5 194.5M422.5 251.5L434.5 242.5M538.5 291.5L539.5 279.5M506.5 124.5L521.5 133.5M507.5 592.5L506.5 579.5M609.5 416.5L617.5 402.5M586.5 679.5L572.5 679.5M546.5 668.5L558.5 666.5M527.5 455.5L537.5 464.5M429.5 208.5L438.5 212.5M601.5 151.5L607.5 139.5M542.5 480.5L526.5 472.5M491.5 494.5L483.5 503.5M411.5 342.5L412.5 327.5M641.5 315.5L630.5 325.5M561.5 618.5L550.5 617.5M483.5 581.5L482.5 566.5M547.5 575.5L533.5 581.5M492.5 347.5L488.5 362.5M549.5 144.5L559.5 155.5M568.5 405.5L577.5 390.5M649.5 193.5L657.5 205.5M501.5 502.5L491.5 494.5M694.5 333.5L687.5 341.5M507.5 276.5L504.5 259.5M565.5 330.5L562.5 343.5M699.5 204.5L692.5 215.5M648.5 343.5L643.5 330.5M714.5 360.5L707.5 348.5M598.5 172.5L582.5 172.5M506.5 184.5L499.5 173.5M497.5 207.5L511.5 215.5M502.5 416.5L513.5 409.5M507.5 382.5L501.5 371.5M694.5 381.5L683.5 373.5M535.5 637.5L521.5 647.5M565.5 330.5L551.5 333.5M545.5 220.5L549.5 205.5M694.5 251.5L706.5 248.5M507.5 276.5L496.5 283.5M702.5 436.5L712.5 422.5M618.5 523.5L635.5 520.5M468.5 417.5L454.5 423.5M570.5 481.5L587.5 482.5M597.5 439.5L609.5 443.5M559.5 218.5L549.5 205.5M579.5 375.5L580.5 364.5M540.5 397.5L552.5 407.5M610.5 229.5L615.5 216.5M669.5 248.5L657.5 250.5M611.5 510.5L625.5 508.5M535.5 637.5L538.5 622.5M509.5 346.5L524.5 349.5M522.5 189.5L539.5 189.5M509.5 346.5L498.5 338.5M580.5 472.5L587.5 482.5M736.5 327.5L720.5 335.5M536.5 372.5L530.5 362.5M468.5 242.5L478.5 247.5M551.5 420.5L538.5 411.5M638.5 353.5L641.5 368.5M707.5 322.5L706.5 337.5M735.5 379.5L720.5 384.5M574.5 247.5L587.5 250.5M607.5 336.5L607.5 321.5M603.5 486.5L600.5 473.5M507.5 276.5L516.5 285.5M466.5 204.5L481.5 206.5M501.5 679.5L486.5 679.5M440.5 386.5L435.5 396.5M662.5 321.5L653.5 307.5M494.5 130.5L506.5 124.5M590.5 466.5L579.5 461.5M589.5 284.5L573.5 280.5M514.5 556.5L516.5 545.5M502.5 550.5L488.5 551.5M443.5 533.5L456.5 536.5M650.5 549.5L645.5 564.5M619.5 443.5L626.5 437.5M422.5 251.5L424.5 236.5M589.5 497.5L587.5 482.5M493.5 379.5L501.5 371.5M576.5 184.5L566.5 195.5M546.5 521.5L560.5 512.5M625.5 228.5L637.5 235.5M561.5 110.5L567.5 102.5M458.5 469.5L466.5 464.5M613.5 578.5L625.5 582.5M439.5 229.5L447.5 242.5M596.5 261.5L597.5 246.5M563.5 122.5L561.5 110.5M564.5 90.5L567.5 102.5M544.5 679.5L546.5 668.5M606.5 402.5L594.5 394.5M550.5 537.5L531.5 541.5M727.5 278.5L713.5 283.5M637.5 262.5L622.5 261.5M547.5 365.5L566.5 366.5M563.5 122.5L549.5 127.5M497.5 207.5L510.5 199.5M581.5 664.5L568.5 669.5M533.5 596.5L520.5 598.5M498.5 234.5L500.5 222.5M623.5 205.5L615.5 216.5M622.5 160.5L612.5 152.5M572.5 679.5L581.5 664.5M572.5 161.5L568.5 145.5M589.5 110.5L573.5 111.5M576.5 184.5L590.5 183.5M503.5 656.5L497.5 669.5M498.5 405.5L514.5 395.5M592.5 311.5L607.5 309.5M663.5 285.5L648.5 276.5M680.5 332.5L668.5 332.5M682.5 226.5L689.5 240.5M651.5 356.5L664.5 359.5M532.5 165.5L541.5 173.5M644.5 403.5L636.5 411.5M500.5 222.5L512.5 229.5M642.5 148.5L630.5 151.5M633.5 194.5L615.5 192.5M508.5 160.5L491.5 161.5M551.5 436.5L535.5 426.5M468.5 494.5L454.5 492.5M519.5 269.5L534.5 270.5M570.5 481.5L557.5 472.5M590.5 160.5L581.5 150.5M736.5 342.5L737.5 357.5M615.5 496.5L625.5 508.5M538.5 313.5L549.5 311.5M673.5 433.5L681.5 446.5M558.5 679.5L544.5 679.5M430.5 491.5L443.5 484.5M579.5 461.5L570.5 469.5M481.5 387.5L467.5 376.5M465.5 391.5L467.5 376.5M659.5 382.5L676.5 383.5M546.5 245.5L541.5 257.5M496.5 283.5L482.5 290.5M514.5 452.5L507.5 444.5M650.5 158.5L642.5 148.5M575.5 591.5L582.5 603.5M442.5 168.5L450.5 176.5M645.5 170.5L656.5 170.5M535.5 228.5L523.5 236.5M620.5 145.5L630.5 151.5M429.5 408.5L423.5 395.5M479.5 516.5L483.5 503.5M531.5 541.5L518.5 534.5M702.5 436.5L697.5 421.5M527.5 455.5L514.5 465.5M712.5 257.5L706.5 248.5M468.5 494.5L472.5 477.5M416.5 420.5L430.5 425.5M557.5 581.5L561.5 592.5M522.5 567.5L518.5 582.5M680.5 193.5L666.5 194.5M608.5 205.5L592.5 206.5M420.5 452.5L436.5 447.5M526.5 293.5L538.5 291.5M561.5 618.5L569.5 631.5M694.5 251.5L689.5 240.5M465.5 391.5L461.5 404.5M625.5 228.5L630.5 246.5M561.5 618.5L575.5 615.5M494.5 130.5L490.5 117.5M564.5 496.5L557.5 484.5M650.5 158.5L656.5 170.5M643.5 330.5L635.5 340.5M693.5 409.5L684.5 420.5M494.5 516.5L483.5 503.5M608.5 205.5L623.5 205.5M610.5 567.5L623.5 566.5M566.5 195.5L554.5 192.5M633.5 194.5L649.5 193.5M545.5 159.5L541.5 173.5M695.5 509.5L694.5 486.5M548.5 347.5L558.5 355.5M548.5 90.5L554.5 101.5M630.5 308.5L630.5 293.5M470.5 529.5L485.5 527.5M538.5 291.5L530.5 304.5M694.5 251.5L701.5 263.5M444.5 498.5L450.5 512.5M615.5 539.5L612.5 555.5M620.5 132.5L631.5 140.5M468.5 494.5L480.5 491.5M673.5 204.5L667.5 215.5M730.5 418.5L727.5 431.5M628.5 450.5L624.5 463.5M662.5 239.5L669.5 248.5M556.5 255.5L541.5 257.5M637.5 235.5L630.5 246.5M483.5 180.5L477.5 195.5M727.5 431.5L724.5 442.5M486.5 663.5L486.5 647.5M516.5 545.5L526.5 554.5M439.5 229.5L451.5 232.5M723.5 350.5L726.5 360.5M501.5 502.5L519.5 502.5M736.5 342.5L723.5 350.5M613.5 578.5L614.5 592.5M486.5 647.5L503.5 641.5M561.5 645.5L567.5 658.5M411.5 342.5L422.5 355.5M584.5 272.5L573.5 280.5M426.5 220.5L429.5 208.5M610.5 567.5L599.5 575.5M530.5 304.5L513.5 300.5M600.5 663.5L586.5 679.5M572.5 679.5L568.5 669.5M555.5 320.5L551.5 333.5M513.5 300.5L516.5 285.5M630.5 151.5L631.5 140.5M429.5 208.5L432.5 196.5M535.5 637.5L538.5 649.5M494.5 130.5L480.5 124.5M633.5 424.5L646.5 417.5M649.5 472.5L635.5 479.5M538.5 649.5L521.5 647.5M480.5 374.5L493.5 379.5M595.5 131.5L608.5 125.5M491.5 161.5L503.5 151.5M558.5 679.5L568.5 669.5M488.5 218.5L481.5 206.5M694.5 333.5L697.5 343.5M451.5 232.5L450.5 220.5M568.5 405.5L584.5 404.5M650.5 459.5L637.5 464.5M569.5 580.5L561.5 592.5M542.5 450.5L533.5 446.5M603.5 486.5L589.5 497.5M602.5 500.5L595.5 512.5M696.5 364.5L707.5 348.5M619.5 316.5L607.5 321.5M552.5 407.5L557.5 394.5M598.5 194.5L590.5 183.5M515.5 679.5L520.5 665.5M514.5 395.5L513.5 409.5M684.5 396.5L676.5 383.5M662.5 182.5L666.5 194.5M439.5 522.5L450.5 512.5M675.5 346.5L664.5 359.5M559.5 218.5L567.5 206.5M468.5 613.5L482.5 597.5M493.5 539.5L505.5 537.5M521.5 206.5L534.5 214.5M463.5 169.5L453.5 165.5M468.5 595.5L483.5 581.5M550.5 113.5L554.5 101.5M618.5 523.5L611.5 510.5M479.5 516.5L485.5 527.5M590.5 183.5L582.5 172.5M714.5 270.5L701.5 263.5M550.5 537.5L541.5 550.5M637.5 464.5L626.5 472.5M686.5 434.5L697.5 421.5M496.5 573.5L506.5 579.5M595.5 131.5L581.5 123.5M604.5 588.5L600.5 600.5M491.5 161.5L499.5 173.5M432.5 196.5L438.5 212.5M558.5 355.5L566.5 366.5M545.5 220.5L534.5 214.5M614.5 175.5L598.5 172.5M668.5 372.5L679.5 361.5M638.5 556.5L623.5 566.5M561.5 110.5L573.5 111.5M466.5 335.5L472.5 324.5M475.5 162.5L482.5 150.5M494.5 516.5L485.5 527.5M630.5 293.5L616.5 300.5M502.5 550.5L493.5 539.5M612.5 555.5L601.5 546.5M577.5 390.5L579.5 375.5M521.5 628.5L514.5 614.5M483.5 411.5L474.5 401.5M521.5 206.5L523.5 222.5M568.5 145.5L559.5 155.5M681.5 446.5L691.5 457.5M633.5 424.5L618.5 430.5M556.5 298.5L550.5 285.5M576.5 570.5L562.5 568.5M670.5 449.5L681.5 446.5M564.5 496.5L549.5 495.5M455.5 458.5L442.5 469.5M491.5 440.5L507.5 434.5M492.5 347.5L503.5 359.5M507.5 444.5L501.5 456.5M625.5 228.5L637.5 223.5M693.5 276.5L700.5 287.5M570.5 481.5L564.5 496.5M527.5 455.5L533.5 446.5M547.5 591.5L533.5 581.5M604.5 588.5L614.5 592.5M645.5 170.5L636.5 160.5M517.5 361.5L530.5 362.5M478.5 463.5L490.5 463.5M555.5 604.5L542.5 606.5M562.5 415.5L575.5 417.5M472.5 440.5L483.5 452.5M454.5 371.5L462.5 360.5M680.5 332.5L687.5 341.5M587.5 227.5L598.5 218.5M530.5 514.5L546.5 521.5M677.5 292.5L679.5 306.5M550.5 617.5L538.5 622.5M523.5 236.5L512.5 229.5M500.5 472.5L486.5 472.5M525.5 488.5L519.5 502.5M561.5 379.5L566.5 366.5M637.5 235.5L637.5 223.5M610.5 567.5L599.5 560.5M526.5 472.5L527.5 455.5M453.5 560.5L460.5 550.5M448.5 279.5L457.5 291.5M724.5 442.5L721.5 449.5M507.5 138.5L493.5 145.5M697.5 228.5L692.5 215.5M709.5 373.5L720.5 384.5M587.5 227.5L575.5 232.5M721.5 449.5L717.5 461.5M531.5 541.5L541.5 550.5M706.5 337.5L707.5 348.5M517.5 171.5L499.5 173.5M724.5 370.5L714.5 360.5M525.5 488.5L514.5 479.5M506.5 627.5L497.5 612.5M707.5 385.5L699.5 397.5M552.5 181.5L539.5 189.5M551.5 420.5L535.5 426.5M579.5 95.5L567.5 102.5M478.5 463.5L483.5 452.5M657.5 205.5L666.5 194.5M609.5 416.5L624.5 414.5M437.5 182.5L442.5 168.5M548.5 232.5L564.5 228.5M549.5 495.5L555.5 503.5M540.5 397.5L527.5 403.5M630.5 308.5L619.5 316.5M571.5 264.5L584.5 272.5M546.5 668.5L535.5 670.5M574.5 247.5L560.5 239.5M663.5 285.5L677.5 292.5M470.5 529.5L465.5 516.5M670.5 482.5L681.5 488.5M619.5 316.5L616.5 300.5M651.5 218.5L657.5 205.5M629.5 365.5L620.5 376.5M541.5 323.5L549.5 311.5M673.5 204.5L657.5 205.5M500.5 472.5L488.5 483.5M566.5 427.5L581.5 434.5M555.5 320.5L562.5 308.5M425.5 383.5L423.5 395.5M688.5 286.5L693.5 276.5M584.5 551.5L572.5 536.5M547.5 270.5L541.5 257.5M528.5 611.5L514.5 614.5M497.5 426.5L491.5 440.5M628.5 593.5L625.5 582.5M702.5 452.5L691.5 457.5M545.5 159.5L556.5 167.5M492.5 226.5L481.5 232.5M552.5 181.5L541.5 173.5M627.5 183.5L633.5 194.5M596.5 261.5L599.5 275.5M474.5 363.5L462.5 360.5M488.5 362.5L503.5 359.5M501.5 502.5L512.5 514.5M598.5 194.5L615.5 192.5M659.5 146.5L662.5 160.5M697.5 228.5L689.5 240.5M640.5 504.5L630.5 494.5M584.5 551.5L601.5 546.5M630.5 400.5L623.5 389.5M593.5 100.5L608.5 110.5M710.5 481.5L694.5 486.5M650.5 516.5L640.5 504.5M629.5 534.5L645.5 533.5M463.5 227.5L481.5 232.5M707.5 307.5L719.5 314.5M693.5 513.5L683.5 528.5M472.5 477.5L466.5 464.5M581.5 138.5L571.5 132.5M549.5 205.5L539.5 189.5M717.5 247.5L706.5 248.5M453.5 560.5L447.5 545.5M538.5 313.5L527.5 322.5M618.5 430.5L624.5 414.5M536.5 564.5L550.5 560.5M713.5 283.5L721.5 291.5M426.5 479.5L443.5 484.5M448.5 279.5L433.5 269.5M546.5 245.5L560.5 239.5M564.5 228.5L559.5 218.5M507.5 382.5L524.5 378.5M602.5 500.5L611.5 510.5M506.5 124.5L490.5 117.5M480.5 491.5L483.5 503.5M540.5 397.5L538.5 411.5M497.5 391.5L487.5 398.5M532.5 201.5L534.5 214.5M594.5 527.5L583.5 530.5M572.5 161.5L581.5 150.5M453.5 441.5L465.5 431.5M472.5 477.5L458.5 469.5M461.5 404.5L474.5 401.5M595.5 131.5L607.5 139.5M712.5 257.5L714.5 270.5M530.5 304.5L544.5 300.5M502.5 416.5L491.5 417.5M618.5 430.5L609.5 443.5M479.5 516.5L465.5 516.5M676.5 383.5L667.5 394.5M482.5 150.5L491.5 161.5M472.5 440.5L465.5 431.5M694.5 251.5L681.5 252.5M672.5 416.5L682.5 408.5M570.5 481.5L557.5 484.5M517.5 361.5L509.5 346.5M488.5 218.5L500.5 222.5M730.5 418.5L712.5 422.5M517.5 361.5L511.5 371.5M437.5 182.5L448.5 191.5M452.5 335.5L461.5 346.5M478.5 463.5L486.5 472.5M435.5 285.5L445.5 292.5M656.5 170.5L667.5 170.5M637.5 235.5L643.5 249.5M468.5 453.5L483.5 452.5M547.5 591.5L542.5 606.5M481.5 259.5L468.5 258.5M471.5 283.5L473.5 269.5M629.5 534.5L637.5 544.5M481.5 259.5L473.5 269.5M675.5 346.5L668.5 332.5M609.5 388.5L623.5 389.5M590.5 160.5L598.5 172.5M558.5 666.5L567.5 658.5M560.5 134.5L571.5 132.5M626.5 548.5L637.5 544.5M695.5 189.5L687.5 203.5M681.5 488.5L684.5 502.5M637.5 223.5L650.5 234.5M571.5 355.5L566.5 366.5M546.5 245.5L556.5 255.5M596.5 297.5L581.5 293.5M566.5 427.5L566.5 442.5M618.5 430.5L626.5 437.5M696.5 364.5L709.5 373.5M600.5 663.5L600.5 679.5M544.5 300.5L549.5 311.5M513.5 409.5L527.5 403.5M450.5 205.5L450.5 220.5M564.5 458.5L566.5 442.5M680.5 213.5L667.5 215.5M549.5 463.5L554.5 450.5M514.5 395.5L527.5 403.5M650.5 516.5L654.5 503.5M637.5 262.5L630.5 246.5M538.5 649.5L551.5 656.5M696.5 364.5L714.5 360.5M456.5 481.5L468.5 494.5M603.5 360.5L588.5 355.5M577.5 448.5L581.5 434.5M578.5 324.5L584.5 333.5M430.5 425.5L440.5 417.5M637.5 262.5L648.5 276.5M497.5 529.5L494.5 516.5M730.5 418.5L718.5 407.5M546.5 668.5L551.5 656.5M493.5 145.5L481.5 136.5M584.5 551.5L587.5 565.5M519.5 251.5L523.5 236.5M560.5 134.5L549.5 144.5M564.5 185.5L566.5 195.5M628.5 593.5L614.5 592.5M693.5 298.5L707.5 307.5M472.5 217.5L481.5 232.5M564.5 496.5L560.5 512.5M592.5 206.5L581.5 197.5M581.5 138.5L592.5 145.5M606.5 373.5L592.5 368.5M644.5 403.5L646.5 417.5M681.5 475.5L680.5 460.5M693.5 409.5L697.5 421.5M630.5 293.5L618.5 288.5M623.5 389.5L617.5 402.5M630.5 293.5L640.5 287.5M606.5 373.5L616.5 364.5M507.5 138.5L516.5 148.5M452.5 335.5L461.5 321.5M543.5 382.5L557.5 394.5M524.5 378.5L530.5 362.5M679.5 361.5L690.5 351.5M643.5 449.5L637.5 437.5M516.5 148.5L521.5 133.5M576.5 570.5L569.5 580.5M551.5 420.5L552.5 407.5M523.5 439.5L533.5 446.5M547.5 270.5L550.5 285.5M422.5 467.5L442.5 469.5M691.5 174.5L675.5 180.5M547.5 270.5L539.5 279.5M515.5 679.5L501.5 679.5M629.5 365.5L616.5 364.5M681.5 475.5L665.5 465.5M420.5 265.5L422.5 251.5M506.5 289.5L496.5 283.5M508.5 526.5L497.5 529.5M579.5 95.5L573.5 111.5M559.5 526.5L560.5 512.5M676.5 239.5L664.5 228.5M680.5 213.5L692.5 215.5M548.5 347.5L535.5 338.5M580.5 472.5L590.5 466.5M650.5 234.5L643.5 249.5M497.5 426.5L507.5 434.5M636.5 411.5L646.5 417.5M570.5 481.5L576.5 493.5M526.5 293.5L516.5 285.5M587.5 565.5L576.5 570.5M576.5 184.5L567.5 174.5M650.5 549.5L637.5 544.5M714.5 360.5L726.5 360.5M662.5 493.5L658.5 480.5M552.5 181.5L556.5 167.5M503.5 359.5L511.5 371.5M467.5 564.5L482.5 566.5M610.5 567.5L613.5 578.5M630.5 400.5L636.5 411.5M735.5 313.5L723.5 323.5M597.5 233.5L607.5 241.5M542.5 450.5L549.5 463.5M511.5 215.5L510.5 199.5M615.5 216.5L627.5 215.5M566.5 366.5L580.5 364.5M465.5 516.5L471.5 507.5M536.5 352.5L535.5 338.5M447.5 545.5L460.5 550.5M618.5 523.5L606.5 521.5M470.5 177.5L469.5 190.5M666.5 309.5L664.5 298.5M430.5 491.5L444.5 498.5M663.5 285.5L664.5 298.5M589.5 497.5L576.5 493.5M566.5 427.5L562.5 415.5M498.5 234.5L492.5 226.5M666.5 553.5L650.5 549.5M456.5 481.5L454.5 492.5M618.5 523.5L625.5 508.5M673.5 433.5L670.5 449.5M514.5 556.5L526.5 554.5M427.5 306.5L427.5 293.5M560.5 239.5L564.5 228.5M457.5 251.5L447.5 242.5M523.5 439.5L535.5 426.5M514.5 423.5L525.5 414.5M547.5 270.5L534.5 270.5M443.5 533.5L455.5 524.5M491.5 247.5L498.5 234.5M471.5 313.5L484.5 317.5M497.5 391.5L514.5 395.5M577.5 448.5L579.5 461.5M482.5 597.5L483.5 581.5M502.5 550.5L508.5 567.5M480.5 491.5L472.5 477.5M712.5 232.5L700.5 239.5M498.5 338.5L507.5 334.5M604.5 588.5L599.5 575.5M541.5 323.5L527.5 322.5M645.5 533.5L658.5 525.5M482.5 566.5L495.5 561.5M521.5 133.5L536.5 131.5M601.5 151.5L590.5 160.5M724.5 370.5L726.5 360.5M461.5 404.5L447.5 408.5M519.5 502.5L512.5 514.5M681.5 475.5L670.5 482.5M491.5 161.5L493.5 145.5M456.5 481.5L472.5 477.5M532.5 165.5L523.5 157.5M545.5 220.5L559.5 218.5M707.5 322.5L694.5 333.5M585.5 238.5L587.5 250.5M637.5 235.5L650.5 234.5M526.5 472.5L514.5 479.5M535.5 498.5L519.5 502.5M481.5 136.5L470.5 145.5M549.5 127.5L560.5 134.5M724.5 370.5L720.5 384.5M554.5 101.5L567.5 102.5M468.5 258.5L478.5 247.5M439.5 229.5L438.5 212.5M662.5 239.5L650.5 234.5M551.5 420.5L566.5 427.5M567.5 318.5L562.5 308.5M734.5 391.5L733.5 404.5M538.5 313.5L530.5 304.5M564.5 458.5L557.5 472.5M733.5 404.5L730.5 418.5M502.5 550.5L514.5 556.5M623.5 566.5L625.5 582.5M590.5 466.5L589.5 450.5M552.5 631.5L548.5 644.5M531.5 541.5L526.5 554.5M620.5 483.5L630.5 494.5M470.5 529.5L467.5 541.5M683.5 528.5L671.5 527.5M688.5 320.5L694.5 333.5M486.5 679.5L486.5 663.5M471.5 313.5L480.5 304.5M609.5 267.5L610.5 254.5M649.5 472.5L637.5 464.5M630.5 293.5L641.5 300.5M577.5 390.5L561.5 379.5M576.5 307.5L581.5 293.5M494.5 184.5L499.5 194.5M424.5 236.5L426.5 220.5M577.5 508.5L564.5 496.5M735.5 313.5L719.5 314.5M587.5 565.5L599.5 575.5M531.5 541.5L533.5 528.5M584.5 272.5L582.5 259.5M461.5 404.5L450.5 395.5M535.5 637.5L521.5 628.5M589.5 497.5L595.5 512.5M448.5 304.5L437.5 299.5M518.5 534.5L505.5 537.5M468.5 242.5L481.5 232.5M702.5 452.5L713.5 445.5M645.5 170.5L631.5 172.5M501.5 487.5L491.5 494.5M702.5 436.5L713.5 445.5M592.5 311.5L596.5 297.5M449.5 318.5L461.5 321.5M519.5 269.5L528.5 259.5M644.5 136.5L642.5 148.5M448.5 304.5L437.5 314.5M727.5 431.5L712.5 422.5M488.5 362.5L501.5 371.5M483.5 180.5L491.5 161.5M470.5 177.5L475.5 162.5M457.5 291.5L460.5 308.5M483.5 452.5L491.5 440.5M733.5 404.5L718.5 407.5M480.5 374.5L481.5 387.5M640.5 504.5L635.5 520.5M668.5 372.5L659.5 382.5M474.5 401.5L468.5 417.5M439.5 229.5L434.5 242.5M675.5 160.5L667.5 170.5M531.5 89.5L548.5 90.5M454.5 371.5L467.5 376.5M535.5 116.5L550.5 113.5M519.5 336.5L527.5 322.5M606.5 373.5L609.5 388.5M492.5 261.5L497.5 270.5M573.5 280.5L561.5 285.5M693.5 298.5L710.5 296.5M535.5 116.5L519.5 119.5M713.5 474.5L710.5 481.5M699.5 204.5L687.5 203.5M628.5 450.5L616.5 455.5M560.5 272.5L550.5 285.5M574.5 247.5L575.5 232.5M679.5 306.5L674.5 319.5M612.5 607.5L600.5 600.5M710.5 481.5L706.5 490.5M452.5 265.5L457.5 251.5M508.5 669.5L497.5 669.5M487.5 610.5L468.5 613.5M637.5 262.5L643.5 249.5M658.5 480.5L670.5 482.5M707.5 385.5L709.5 373.5M481.5 387.5L497.5 391.5M605.5 287.5L599.5 275.5M650.5 438.5L657.5 450.5M439.5 374.5L423.5 368.5M496.5 573.5L483.5 581.5M468.5 613.5L468.5 595.5M646.5 578.5L645.5 564.5M630.5 308.5L641.5 300.5M457.5 251.5L441.5 254.5M448.5 155.5L453.5 142.5M468.5 417.5L465.5 431.5M707.5 307.5L710.5 296.5M456.5 481.5L458.5 469.5M643.5 330.5L651.5 322.5M560.5 512.5L555.5 503.5M534.5 270.5L541.5 257.5M453.5 142.5L463.5 128.5M521.5 206.5L511.5 215.5M629.5 534.5L615.5 539.5M581.5 123.5L571.5 132.5M517.5 171.5L522.5 189.5M506.5 184.5L510.5 199.5M541.5 550.5L553.5 549.5M535.5 116.5L536.5 131.5M635.5 479.5L637.5 464.5M436.5 360.5L449.5 363.5M602.5 500.5L589.5 497.5M483.5 180.5L494.5 184.5M626.5 548.5L615.5 539.5M702.5 436.5L686.5 434.5M536.5 372.5L524.5 378.5M467.5 564.5L460.5 550.5M581.5 197.5L590.5 183.5M526.5 472.5L537.5 464.5M612.5 607.5L614.5 592.5M648.5 276.5L640.5 287.5M471.5 313.5L460.5 308.5M558.5 666.5L551.5 656.5M506.5 627.5L521.5 628.5M607.5 139.5L592.5 145.5M696.5 364.5L683.5 373.5M568.5 405.5L557.5 394.5M531.5 144.5L521.5 133.5M480.5 491.5L491.5 494.5M610.5 229.5L607.5 241.5M646.5 489.5L635.5 479.5M468.5 417.5L480.5 427.5M452.5 265.5L433.5 269.5M549.5 463.5L537.5 464.5M658.5 425.5L645.5 428.5M598.5 172.5L590.5 183.5M597.5 246.5L610.5 254.5M668.5 372.5L653.5 370.5M535.5 498.5L549.5 495.5M550.5 537.5L553.5 549.5M519.5 119.5L521.5 133.5M436.5 510.5L444.5 498.5M497.5 426.5L514.5 423.5M483.5 411.5L468.5 417.5M622.5 160.5L636.5 160.5M481.5 259.5L492.5 261.5M548.5 232.5L534.5 245.5M650.5 438.5L662.5 439.5M523.5 222.5L535.5 228.5M494.5 300.5L513.5 300.5M587.5 565.5L599.5 560.5M472.5 217.5L460.5 215.5M620.5 376.5L623.5 389.5M551.5 656.5L567.5 658.5M544.5 300.5L550.5 285.5M713.5 283.5L700.5 287.5M622.5 121.5L620.5 132.5M581.5 138.5L581.5 123.5M640.5 182.5L651.5 180.5M473.5 553.5L467.5 564.5M684.5 420.5L672.5 416.5M457.5 291.5L461.5 274.5M571.5 355.5L588.5 355.5M521.5 206.5L510.5 199.5M550.5 560.5L541.5 550.5M675.5 180.5L667.5 170.5M676.5 239.5L669.5 248.5M637.5 223.5L627.5 215.5M471.5 313.5L472.5 324.5M601.5 546.5L599.5 560.5M510.5 199.5L522.5 189.5M556.5 298.5L549.5 311.5M641.5 315.5L651.5 322.5M580.5 633.5L576.5 647.5M587.5 227.5L597.5 233.5M429.5 408.5L430.5 425.5M489.5 194.5L481.5 206.5M592.5 421.5L575.5 417.5M581.5 664.5L567.5 658.5M454.5 423.5L465.5 431.5M575.5 591.5L561.5 592.5M581.5 123.5L589.5 110.5M658.5 425.5L650.5 438.5M662.5 493.5L670.5 482.5M556.5 255.5L571.5 264.5M671.5 527.5L680.5 516.5M601.5 151.5L607.5 162.5M595.5 131.5L592.5 145.5M580.5 472.5L579.5 461.5M630.5 308.5L630.5 325.5M592.5 648.5L581.5 664.5M629.5 365.5L626.5 352.5M489.5 194.5L499.5 194.5M530.5 514.5L545.5 508.5M571.5 264.5L582.5 259.5M664.5 228.5L682.5 226.5M495.5 586.5L496.5 600.5M506.5 184.5L499.5 194.5M682.5 226.5L667.5 215.5M523.5 439.5L507.5 434.5M528.5 611.5L520.5 598.5M551.5 436.5L538.5 439.5M630.5 400.5L638.5 391.5M614.5 175.5L603.5 183.5M707.5 322.5L694.5 310.5M737.5 357.5L726.5 360.5M550.5 537.5L572.5 536.5M651.5 356.5L648.5 343.5M644.5 403.5L652.5 393.5M507.5 276.5L519.5 269.5M675.5 180.5L685.5 184.5M706.5 248.5L700.5 239.5M564.5 90.5L579.5 95.5M618.5 523.5L629.5 534.5M534.5 245.5L519.5 251.5M551.5 436.5L566.5 442.5M543.5 382.5L524.5 378.5M659.5 562.5L650.5 549.5M497.5 529.5L493.5 539.5M579.5 95.5L593.5 100.5M706.5 490.5L695.5 509.5M635.5 572.5L625.5 582.5M547.5 365.5L543.5 382.5M600.5 348.5L612.5 350.5M736.5 366.5L724.5 370.5M550.5 537.5L546.5 521.5M650.5 516.5L667.5 509.5M424.5 236.5L434.5 242.5M447.5 408.5L450.5 395.5M695.5 509.5L693.5 513.5M468.5 595.5L459.5 575.5M459.5 504.5L444.5 498.5M468.5 595.5L472.5 576.5M459.5 575.5L453.5 560.5M688.5 320.5L694.5 310.5M549.5 127.5L536.5 131.5M463.5 128.5L472.5 113.5M412.5 327.5L425.5 323.5M686.5 264.5L677.5 277.5M527.5 322.5L530.5 304.5M619.5 443.5L609.5 443.5M592.5 421.5L597.5 439.5M519.5 336.5L511.5 324.5M607.5 336.5L612.5 350.5M472.5 113.5L487.5 105.5M560.5 272.5L556.5 255.5M640.5 287.5L641.5 300.5M680.5 193.5L673.5 204.5M448.5 304.5L457.5 291.5M661.5 345.5L668.5 332.5M603.5 456.5L590.5 466.5M448.5 304.5L460.5 308.5M536.5 153.5L523.5 157.5M443.5 484.5L444.5 498.5M565.5 547.5L550.5 537.5M724.5 442.5L713.5 445.5M500.5 472.5L501.5 487.5M468.5 494.5L459.5 504.5M501.5 487.5L514.5 479.5M545.5 508.5L546.5 521.5M673.5 404.5L682.5 408.5M523.5 439.5L507.5 444.5M542.5 606.5L538.5 622.5M677.5 292.5L677.5 277.5M615.5 539.5L601.5 546.5M472.5 440.5L491.5 440.5M568.5 294.5L573.5 280.5M645.5 381.5L638.5 391.5M597.5 246.5L587.5 250.5M432.5 196.5L448.5 191.5M494.5 516.5L512.5 514.5M466.5 335.5L475.5 349.5M497.5 327.5L511.5 324.5M589.5 284.5L584.5 272.5M696.5 364.5L694.5 381.5M544.5 679.5L535.5 670.5M536.5 564.5L547.5 575.5M682.5 226.5L692.5 215.5M736.5 342.5L720.5 335.5M607.5 139.5L612.5 152.5M659.5 146.5L675.5 160.5M649.5 193.5L651.5 180.5M480.5 374.5L488.5 362.5M641.5 368.5L632.5 380.5M461.5 404.5L468.5 417.5M555.5 604.5L561.5 592.5M459.5 504.5L465.5 516.5M734.5 391.5L720.5 384.5M681.5 252.5L686.5 264.5M526.5 472.5L514.5 465.5M576.5 647.5L567.5 658.5M483.5 452.5L490.5 463.5M646.5 578.5L646.5 592.5M478.5 463.5L472.5 477.5M416.5 295.5L427.5 293.5M422.5 355.5L423.5 368.5M667.5 509.5L684.5 502.5M441.5 346.5L437.5 332.5M508.5 526.5L505.5 537.5M613.5 471.5L600.5 473.5M712.5 396.5L705.5 409.5M447.5 242.5L434.5 242.5M432.5 499.5L430.5 491.5M453.5 441.5L443.5 428.5M441.5 346.5L431.5 348.5M488.5 218.5L492.5 226.5M591.5 590.5L584.5 579.5M639.5 207.5L637.5 223.5M723.5 350.5L720.5 335.5M508.5 242.5L519.5 251.5M702.5 436.5L702.5 452.5M542.5 480.5L537.5 464.5M604.5 533.5L601.5 546.5M578.5 324.5L577.5 341.5M614.5 277.5L622.5 261.5M649.5 472.5L646.5 489.5M662.5 182.5L667.5 170.5M625.5 508.5L630.5 494.5M721.5 303.5L719.5 314.5M459.5 183.5L469.5 190.5M458.5 195.5L469.5 190.5M571.5 355.5L562.5 343.5M563.5 122.5L571.5 132.5M694.5 251.5L686.5 264.5M514.5 423.5L502.5 416.5M482.5 334.5L484.5 317.5M418.5 279.5L435.5 285.5M569.5 580.5L562.5 568.5M561.5 379.5L557.5 394.5M623.5 205.5L615.5 192.5M590.5 160.5L592.5 145.5M548.5 644.5L551.5 656.5M494.5 130.5L493.5 145.5M664.5 228.5L650.5 234.5M491.5 247.5L478.5 247.5M563.5 122.5L560.5 134.5M424.5 236.5L439.5 229.5M532.5 201.5L539.5 189.5M650.5 459.5L643.5 449.5M626.5 352.5L635.5 340.5M645.5 381.5L653.5 370.5M566.5 442.5L554.5 450.5M673.5 204.5L687.5 203.5M633.5 194.5L639.5 207.5M624.5 414.5L636.5 411.5M477.5 195.5L469.5 190.5M504.5 259.5L491.5 247.5M450.5 352.5L449.5 363.5M411.5 357.5L423.5 368.5M625.5 228.5L627.5 215.5M452.5 335.5L449.5 318.5M564.5 185.5L567.5 174.5M656.5 170.5L662.5 160.5M502.5 550.5L505.5 537.5M506.5 124.5L506.5 109.5M458.5 195.5L450.5 205.5M645.5 533.5L637.5 544.5M539.5 279.5L550.5 285.5M455.5 524.5L450.5 512.5M607.5 336.5L618.5 328.5M435.5 396.5L423.5 395.5M670.5 482.5L665.5 465.5M564.5 458.5L577.5 448.5M569.5 631.5L575.5 615.5M615.5 496.5L630.5 494.5M591.5 612.5L600.5 600.5M593.5 327.5L607.5 336.5M483.5 411.5L498.5 405.5M587.5 227.5L585.5 238.5M532.5 165.5L536.5 153.5M555.5 320.5L541.5 323.5M503.5 656.5L508.5 669.5M608.5 110.5L622.5 121.5M597.5 233.5L610.5 229.5M519.5 251.5L528.5 259.5M481.5 387.5L493.5 379.5M442.5 469.5L456.5 481.5M481.5 232.5L478.5 247.5M538.5 411.5L527.5 403.5M484.5 317.5L472.5 324.5M472.5 217.5L466.5 204.5M673.5 494.5L667.5 509.5M478.5 463.5L466.5 464.5M451.5 232.5L463.5 227.5M620.5 483.5L613.5 471.5M545.5 508.5L555.5 503.5M567.5 604.5L575.5 615.5M530.5 514.5L512.5 514.5M664.5 298.5L679.5 306.5M607.5 139.5L608.5 125.5M519.5 336.5L524.5 349.5M552.5 631.5L535.5 637.5M548.5 232.5L560.5 239.5M529.5 391.5L524.5 378.5M497.5 207.5L481.5 206.5M576.5 307.5L567.5 318.5M516.5 312.5L511.5 324.5M458.5 240.5L463.5 227.5M508.5 242.5L498.5 234.5M500.5 222.5L492.5 226.5M635.5 479.5L626.5 472.5M535.5 670.5L534.5 659.5M623.5 339.5L635.5 340.5M534.5 245.5L535.5 228.5M452.5 382.5L439.5 374.5M623.5 339.5L612.5 350.5M568.5 145.5L581.5 138.5M504.5 259.5L519.5 269.5M704.5 277.5L701.5 263.5M542.5 450.5L538.5 439.5M673.5 433.5L662.5 439.5M577.5 390.5L594.5 394.5M497.5 207.5L499.5 194.5M507.5 444.5L491.5 440.5M482.5 597.5L495.5 586.5M413.5 403.5L423.5 395.5M577.5 390.5L593.5 381.5M695.5 509.5L684.5 502.5M461.5 155.5L453.5 165.5M645.5 381.5L632.5 380.5M598.5 172.5L607.5 162.5M536.5 352.5L524.5 349.5M500.5 472.5L490.5 463.5M592.5 311.5L586.5 301.5M480.5 304.5L484.5 317.5M651.5 218.5L667.5 215.5M693.5 513.5L680.5 516.5M497.5 327.5L498.5 338.5M501.5 96.5L506.5 109.5M673.5 543.5L660.5 539.5M463.5 128.5L480.5 124.5M641.5 315.5L653.5 307.5M485.5 274.5L497.5 270.5M551.5 436.5L542.5 450.5M456.5 481.5L443.5 484.5M501.5 502.5L512.5 492.5M450.5 205.5L466.5 204.5M501.5 313.5L516.5 312.5M534.5 270.5L528.5 281.5M691.5 174.5L695.5 189.5M707.5 385.5L720.5 384.5M508.5 242.5L512.5 229.5M666.5 309.5L674.5 319.5M547.5 591.5L561.5 592.5M423.5 339.5L437.5 332.5M628.5 593.5L612.5 607.5M592.5 368.5L593.5 381.5M646.5 489.5L640.5 504.5M443.5 428.5L440.5 417.5M508.5 567.5L522.5 567.5M516.5 93.5L523.5 104.5M581.5 138.5L595.5 131.5M430.5 425.5L438.5 436.5M591.5 590.5L599.5 575.5M568.5 405.5L575.5 417.5M468.5 453.5L453.5 441.5M671.5 527.5L667.5 509.5M432.5 196.5L437.5 182.5M509.5 346.5L492.5 347.5M493.5 539.5L488.5 551.5M452.5 382.5L450.5 395.5M596.5 261.5L582.5 259.5M695.5 189.5L680.5 193.5M664.5 298.5L653.5 307.5M633.5 424.5L645.5 428.5M590.5 466.5L600.5 473.5M470.5 177.5L463.5 169.5M721.5 303.5L707.5 307.5M519.5 119.5L506.5 124.5M686.5 434.5L681.5 446.5M626.5 548.5L623.5 566.5M704.5 277.5L700.5 287.5M629.5 534.5L635.5 520.5M475.5 162.5L463.5 169.5M561.5 379.5L543.5 382.5M660.5 539.5L671.5 527.5M468.5 242.5L468.5 258.5M482.5 334.5L497.5 327.5M486.5 663.5L497.5 669.5M437.5 332.5L437.5 314.5M714.5 360.5L709.5 373.5M468.5 453.5L466.5 464.5M652.5 262.5L662.5 272.5M582.5 623.5L569.5 631.5M561.5 379.5L579.5 375.5M649.5 193.5L666.5 194.5M736.5 366.5L726.5 360.5M516.5 312.5L530.5 304.5M474.5 363.5L480.5 374.5M662.5 321.5L668.5 332.5M582.5 623.5L575.5 615.5M572.5 161.5L556.5 167.5M704.5 277.5L714.5 270.5M650.5 438.5L643.5 449.5M700.5 239.5L689.5 240.5M587.5 250.5L582.5 259.5M599.5 575.5L599.5 560.5M659.5 382.5L653.5 370.5M593.5 327.5L592.5 311.5M514.5 423.5L535.5 426.5M573.5 280.5L581.5 293.5M572.5 522.5L583.5 530.5M592.5 311.5L607.5 321.5M539.5 279.5L528.5 281.5M508.5 160.5L523.5 157.5M459.5 575.5L472.5 576.5M413.5 310.5L425.5 323.5M525.5 414.5L535.5 426.5M651.5 356.5L638.5 353.5M577.5 508.5L560.5 512.5M413.5 403.5L429.5 408.5M535.5 338.5L551.5 333.5M602.5 500.5L615.5 496.5M503.5 641.5L503.5 656.5M569.5 580.5L557.5 581.5M718.5 407.5L712.5 396.5M676.5 239.5L682.5 226.5M558.5 679.5L546.5 668.5M563.5 122.5L550.5 113.5M441.5 254.5L434.5 242.5M688.5 286.5L700.5 287.5M564.5 496.5L576.5 493.5M533.5 596.5L526.5 589.5M702.5 452.5L692.5 445.5M614.5 277.5L618.5 288.5M463.5 227.5L450.5 220.5M702.5 436.5L692.5 445.5M704.5 277.5L693.5 276.5M618.5 243.5L610.5 254.5M721.5 449.5L713.5 445.5M500.5 472.5L514.5 479.5M594.5 527.5L604.5 533.5M482.5 334.5L472.5 324.5M582.5 603.5L600.5 600.5M466.5 204.5L469.5 190.5M586.5 679.5L581.5 664.5M592.5 311.5L576.5 307.5M531.5 144.5L523.5 157.5M519.5 269.5L519.5 251.5M495.5 586.5L506.5 579.5M496.5 573.5L495.5 561.5M517.5 361.5L503.5 359.5M525.5 488.5L512.5 492.5M535.5 116.5L528.5 124.5M619.5 316.5L618.5 328.5M688.5 286.5L693.5 298.5M614.5 277.5L605.5 287.5M707.5 385.5L694.5 381.5M622.5 160.5L631.5 172.5M529.5 679.5L535.5 670.5M607.5 321.5L607.5 309.5M724.5 370.5L709.5 373.5M712.5 257.5L701.5 263.5M594.5 527.5L590.5 538.5M630.5 278.5L614.5 277.5M673.5 433.5L672.5 416.5M662.5 272.5L677.5 277.5M499.5 173.5L494.5 184.5M548.5 644.5L535.5 637.5M561.5 556.5L573.5 559.5M670.5 449.5L662.5 439.5M467.5 541.5L456.5 536.5M516.5 312.5L513.5 300.5M418.5 279.5L427.5 293.5M535.5 116.5L523.5 104.5M447.5 408.5L440.5 417.5M717.5 461.5L713.5 474.5M649.5 472.5L658.5 480.5M560.5 272.5L571.5 264.5M675.5 346.5L680.5 332.5M474.5 363.5L475.5 349.5M622.5 160.5L614.5 175.5M606.5 373.5L620.5 376.5M594.5 394.5L609.5 388.5M497.5 612.5L487.5 610.5M447.5 408.5L435.5 396.5M568.5 145.5L581.5 150.5M533.5 528.5L518.5 534.5M551.5 420.5L562.5 415.5M592.5 206.5L578.5 216.5M645.5 381.5L641.5 368.5M442.5 168.5L448.5 155.5M517.5 171.5L508.5 160.5M538.5 313.5L541.5 323.5M496.5 283.5L497.5 270.5M507.5 444.5L507.5 434.5M622.5 160.5L607.5 162.5M590.5 160.5L582.5 172.5M528.5 124.5L521.5 133.5M660.5 539.5L650.5 549.5M510.5 199.5L499.5 194.5M594.5 394.5L597.5 407.5M676.5 383.5L683.5 373.5M486.5 472.5L490.5 463.5M497.5 207.5L500.5 222.5M528.5 281.5L516.5 285.5M607.5 309.5L596.5 297.5M473.5 553.5L488.5 551.5M597.5 246.5L607.5 241.5M508.5 526.5L512.5 514.5M707.5 385.5L712.5 396.5M497.5 529.5L485.5 527.5M560.5 272.5L573.5 280.5M679.5 306.5L693.5 298.5M552.5 407.5L538.5 411.5M520.5 665.5L535.5 670.5M501.5 456.5L514.5 465.5M447.5 242.5L458.5 240.5M575.5 417.5L581.5 434.5M600.5 348.5L607.5 336.5M450.5 352.5L436.5 360.5M675.5 160.5L662.5 160.5M628.5 450.5L643.5 449.5M463.5 169.5L459.5 183.5M552.5 631.5L561.5 618.5M683.5 528.5L673.5 543.5M680.5 213.5L687.5 203.5M651.5 218.5L664.5 228.5M631.5 172.5L640.5 182.5M425.5 383.5L439.5 374.5M592.5 421.5L605.5 430.5M559.5 526.5L572.5 522.5M439.5 229.5L450.5 220.5M651.5 322.5L656.5 333.5M447.5 545.5L443.5 533.5M667.5 394.5L673.5 404.5M707.5 322.5L720.5 335.5M574.5 247.5L556.5 255.5M597.5 439.5L589.5 450.5M556.5 298.5L562.5 308.5M501.5 96.5L516.5 93.5M622.5 160.5L630.5 151.5M659.5 408.5L667.5 394.5M508.5 160.5L516.5 148.5M625.5 508.5L635.5 520.5M472.5 113.5L490.5 117.5M603.5 183.5L590.5 183.5M600.5 348.5L603.5 360.5M545.5 159.5L549.5 144.5M656.5 333.5L661.5 345.5M501.5 313.5L484.5 317.5M551.5 436.5L566.5 427.5M535.5 116.5L539.5 101.5M448.5 279.5L461.5 274.5M509.5 346.5L503.5 359.5M506.5 184.5L522.5 189.5M656.5 170.5L651.5 180.5M506.5 289.5L494.5 300.5M659.5 146.5L650.5 158.5M547.5 591.5L555.5 604.5M718.5 407.5L712.5 422.5M509.5 346.5L507.5 334.5M412.5 388.5L423.5 395.5M608.5 110.5L597.5 120.5M482.5 150.5L470.5 145.5M597.5 439.5L603.5 456.5M721.5 303.5L710.5 296.5M501.5 679.5L497.5 669.5M548.5 232.5L545.5 220.5M624.5 414.5L617.5 402.5M467.5 541.5L473.5 553.5M734.5 391.5L723.5 396.5M497.5 207.5L488.5 218.5M427.5 306.5L437.5 299.5M561.5 556.5L553.5 549.5M531.5 144.5L516.5 148.5M516.5 148.5L503.5 151.5M519.5 502.5L512.5 492.5M727.5 278.5L714.5 270.5M608.5 205.5L598.5 194.5M683.5 528.5L680.5 516.5M483.5 503.5L471.5 507.5M516.5 93.5L506.5 109.5M662.5 239.5L657.5 250.5M498.5 405.5L497.5 391.5M585.5 238.5L575.5 232.5M592.5 421.5L597.5 407.5M472.5 113.5L480.5 124.5M486.5 679.5L497.5 669.5M437.5 299.5L445.5 292.5M652.5 262.5L648.5 276.5M511.5 215.5L512.5 229.5M534.5 245.5L541.5 257.5M548.5 232.5L535.5 228.5M560.5 239.5L556.5 255.5M569.5 631.5L561.5 645.5M506.5 627.5L514.5 614.5M507.5 382.5L493.5 379.5M552.5 181.5L567.5 174.5M427.5 306.5L437.5 314.5M662.5 272.5L648.5 276.5M631.5 172.5L636.5 160.5M710.5 296.5L713.5 283.5M548.5 90.5L564.5 90.5M471.5 313.5L470.5 299.5M523.5 439.5L538.5 439.5M594.5 394.5L593.5 381.5M650.5 438.5L645.5 428.5M677.5 277.5L693.5 276.5M461.5 346.5L462.5 360.5M638.5 353.5L626.5 352.5M535.5 426.5L538.5 411.5M501.5 679.5L508.5 669.5M628.5 593.5L636.5 584.5M538.5 291.5L544.5 300.5M603.5 456.5L600.5 473.5M455.5 458.5L453.5 441.5M603.5 360.5L592.5 368.5M450.5 395.5L435.5 396.5M601.5 546.5L590.5 538.5M454.5 423.5L440.5 417.5M664.5 359.5L653.5 370.5M550.5 560.5L553.5 549.5M633.5 424.5L624.5 414.5M589.5 284.5L605.5 287.5M521.5 206.5L522.5 189.5M681.5 252.5L669.5 248.5M564.5 458.5L579.5 461.5M540.5 397.5L529.5 391.5M718.5 407.5L723.5 396.5M598.5 194.5L581.5 197.5M520.5 523.5L533.5 528.5M693.5 409.5L705.5 409.5M633.5 424.5L637.5 437.5M416.5 420.5L429.5 408.5M649.5 472.5L665.5 465.5M613.5 578.5L623.5 566.5M690.5 469.5L702.5 468.5M545.5 159.5L559.5 155.5M507.5 276.5L497.5 270.5M680.5 460.5L691.5 457.5M563.5 122.5L581.5 123.5M628.5 450.5L637.5 464.5M549.5 311.5L562.5 308.5M627.5 183.5L640.5 182.5M568.5 294.5L562.5 308.5M455.5 458.5L466.5 464.5M692.5 445.5L691.5 457.5M577.5 508.5L585.5 520.5M580.5 633.5L569.5 631.5M470.5 529.5L456.5 536.5M508.5 604.5L514.5 614.5M599.5 575.5L613.5 578.5M422.5 251.5L433.5 269.5M610.5 567.5L612.5 555.5M688.5 320.5L707.5 322.5M514.5 452.5L514.5 465.5M589.5 284.5L596.5 297.5M633.5 128.5L644.5 136.5" stroke="#6666e6" fill="none"/>
<path d="M531 89h1v1h-1zM548 90h1v1h-1zM564 90h1v1h-1zM579 95h1v1h-1zM593 100h1v1h-1zM608 110h1v1h-1zM622 121h1v1h-1zM633 128h1v1h-1zM644 136h1v1h-1zM659 146h1v1h-1zM675 160h1v1h-1zM691 174h1v1h-1zM695 189h1v1h-1zM699 204h1v1h-1zM706 218h1v1h-1zM712 232h1v1h-1zM717 247h1v1h-1zM722 261h1v1h-1zM727 278h1v1h-1zM732 295h1v1h-1zM735 313h1v1h-1zM736 327h1v1h-1zM736 342h1v1h-1zM737 357h1v1h-1zM736 366h1v1h-1zM735 379h1v1h-1zM734 391h1v1h-1zM733 404h1v1h-1zM730 418h1v1h-1zM727 431h1v1h-1zM724 442h1v1h-1zM721 449h1v1h-1zM717 461h1v1h-1zM713 474h1v1h-1zM710 481h1v1h-1zM706 490h1v1h-1zM695 509h1v1h-1zM693 513h1v1h-1zM683 528h1v1h-1zM673 543h1v1h-1zM666 553h1v1h-1zM659 562h1v1h-1zM646 578h1v1h-1zM646 592h1v1h-1zM628 593h1v1h-1zM612 607h1v1h-1zM591 612h1v1h-1zM582 623h1v1h-1zM580 633h1v1h-1zM592 648h1v1h-1zM600 648h1v1h-1zM600 663h1v1h-1zM600 679h1v1h-1zM586 679h1v1h-1zM572 679h1v1h-1zM558 679h1v1h-1zM544 679h1v1h-1zM529 679h1v1h-1zM515 679h1v1h-1zM501 679h1v1h-1zM486 679h1v1h-1zM486 663h1v1h-1zM486 647h1v1h-1zM503 641h1v1h-1zM506 627h1v1h-1zM497 612h1v1h-1zM487 610h1v1h-1zM468 613h1v1h-1zM468 595h1v1h-1zM459 575h1v1h-1zM453 560h1v1h-1zM447 545h1v1h-1zM443 533h1v1h-1zM439 522h1v1h-1zM436 510h1v1h-1zM432 499h1v1h-1zM430 491h1v1h-1zM426 479h1v1h-1zM422 467h1v1h-1zM420 452h1v1h-1zM417 438h1v1h-1zM416 420h1v1h-1zM413 403h1v1h-1zM412 388h1v1h-1zM411 373h1v1h-1zM411 357h1v1h-1zM411 342h1v1h-1zM412 327h1v1h-1zM413 310h1v1h-1zM416 295h1v1h-1zM418 279h1v1h-1zM420 265h1v1h-1zM422 251h1v1h-1zM424 236h1v1h-1zM426 220h1v1h-1zM429 208h1v1h-1zM432 196h1v1h-1zM437 182h1v1h-1zM442 168h1v1h-1zM448 155h1v1h-1zM453 142h1v1h-1zM463 128h1v1h-1zM472 113h1v1h-1zM487 105h1v1h-1zM501 96h1v1h-1zM516 93h1v1h-1zM439 229h1v1h-1zM673 433h1v1h-1zM441 346h1v1h-1zM564 185h1v1h-1zM650 158h1v1h-1zM540 397h1v1h-1zM551 436h1v1h-1zM500 472h1v1h-1zM637 262h1v1h-1zM507 276h1v1h-1zM702 436h1v1h-1zM565 547h1v1h-1zM531 144h1v1h-1zM478 463h1v1h-1zM508 526h1v1h-1zM651 218h1v1h-1zM681 475h1v1h-1zM635 572h1v1h-1zM550 537h1v1h-1zM688 320h1v1h-1zM694 251h1v1h-1zM593 327h1v1h-1zM608 205h1v1h-1zM470 529h1v1h-1zM658 425h1v1h-1zM427 306h1v1h-1zM482 597h1v1h-1zM452 265h1v1h-1zM575 591h1v1h-1zM483 411h1v1h-1zM630 308h1v1h-1zM603 486h1v1h-1zM630 400h1v1h-1zM592 206h1v1h-1zM572 161h1v1h-1zM568 405h1v1h-1zM662 321h1v1h-1zM538 313h1v1h-1zM707 322h1v1h-1zM526 293h1v1h-1zM568 145h1v1h-1zM594 527h1v1h-1zM676 239h1v1h-1zM568 294h1v1h-1zM497 426h1v1h-1zM514 452h1v1h-1zM601 151h1v1h-1zM555 320h1v1h-1zM465 391h1v1h-1zM542 480h1v1h-1zM521 206h1v1h-1zM457 251h1v1h-1zM523 222h1v1h-1zM452 335h1v1h-1zM428 439h1v1h-1zM467 541h1v1h-1zM718 407h1v1h-1zM547 591h1v1h-1zM488 483h1v1h-1zM546 245h1v1h-1zM531 541h1v1h-1zM576 184h1v1h-1zM555 604h1v1h-1zM662 493h1v1h-1zM592 421h1v1h-1zM630 278h1v1h-1zM628 450h1v1h-1zM668 372h1v1h-1zM690 469h1v1h-1zM619 316h1v1h-1zM530 514h1v1h-1zM501 313h1v1h-1zM627 183h1v1h-1zM570 481h1v1h-1zM675 346h1v1h-1zM551 420h1v1h-1zM468 453h1v1h-1zM455 458h1v1h-1zM545 508h1v1h-1zM651 356h1v1h-1zM620 483h1v1h-1zM526 472h1v1h-1zM602 500h1v1h-1zM552 631h1v1h-1zM470 177h1v1h-1zM497 207h1v1h-1zM606 373h1v1h-1zM680 213h1v1h-1zM696 364h1v1h-1zM707 385h1v1h-1zM609 416h1v1h-1zM517 171h1v1h-1zM723 396h1v1h-1zM694 381h1v1h-1zM626 548h1v1h-1zM618 523h1v1h-1zM587 227h1v1h-1zM697 228h1v1h-1zM425 323h1v1h-1zM517 361h1v1h-1zM548 644h1v1h-1zM675 180h1v1h-1zM542 450h1v1h-1zM548 232h1v1h-1zM486 472h1v1h-1zM508 242h1v1h-1zM650 438h1v1h-1zM451 232h1v1h-1zM606 521h1v1h-1zM506 289h1v1h-1zM659 382h1v1h-1zM549 463h1v1h-1zM547 365h1v1h-1zM680 193h1v1h-1zM479 516h1v1h-1zM508 160h1v1h-1zM532 201h1v1h-1zM581 664h1v1h-1zM581 138h1v1h-1zM650 459h1v1h-1zM652 262h1v1h-1zM534 245h1v1h-1zM538 291h1v1h-1zM483 180h1v1h-1zM566 427h1v1h-1zM523 439h1v1h-1zM666 309h1v1h-1zM571 355h1v1h-1zM519 336h1v1h-1zM497 529h1v1h-1zM641 315h1v1h-1zM578 324h1v1h-1zM597 439h1v1h-1zM535 116h1v1h-1zM536 564h1v1h-1zM633 424h1v1h-1zM609 267h1v1h-1zM473 553h1v1h-1zM577 508h1v1h-1zM501 502h1v1h-1zM622 160h1v1h-1zM574 247h1v1h-1zM461 155h1v1h-1zM629 534h1v1h-1zM541 323h1v1h-1zM638 556h1v1h-1zM448 279h1v1h-1zM542 606h1v1h-1zM458 195h1v1h-1zM585 238h1v1h-1zM494 130h1v1h-1zM454 371h1v1h-1zM584 551h1v1h-1zM577 341h1v1h-1zM623 205h1v1h-1zM511 215h1v1h-1zM643 449h1v1h-1zM564 496h1v1h-1zM644 403h1v1h-1zM625 228h1v1h-1zM504 259h1v1h-1zM466 335h1v1h-1zM648 343h1v1h-1zM475 162h1v1h-1zM679 361h1v1h-1zM688 286h1v1h-1zM566 195h1v1h-1zM552 407h1v1h-1zM452 382h1v1h-1zM507 138h1v1h-1zM481 259h1v1h-1zM595 131h1v1h-1zM506 184h1v1h-1zM508 604h1v1h-1zM453 441h1v1h-1zM516 148h1v1h-1zM519 119h1v1h-1zM461 346h1v1h-1zM477 195h1v1h-1zM559 526h1v1h-1zM576 647h1v1h-1zM468 242h1v1h-1zM577 390h1v1h-1zM519 269h1v1h-1zM440 386h1v1h-1zM546 668h1v1h-1zM724 370h1v1h-1zM535 637h1v1h-1zM425 383h1v1h-1zM606 402h1v1h-1zM619 443h1v1h-1zM442 469h1v1h-1zM482 334h1v1h-1zM491 247h1v1h-1zM456 481h1v1h-1zM645 170h1v1h-1zM624 463h1v1h-1zM715 434h1v1h-1zM651 292h1v1h-1zM662 272h1v1h-1zM502 550h1v1h-1zM694 333h1v1h-1zM560 239h1v1h-1zM615 539h1v1h-1zM723 323h1v1h-1zM600 348h1v1h-1zM620 132h1v1h-1zM461 404h1v1h-1zM536 352h1v1h-1zM547 575h1v1h-1zM438 212h1v1h-1zM492 261h1v1h-1zM547 270h1v1h-1zM565 330h1v1h-1zM545 220h1v1h-1zM514 423h1v1h-1zM649 472h1v1h-1zM482 150h1v1h-1zM572 522h1v1h-1zM532 165h1v1h-1zM523 104h1v1h-1zM615 496h1v1h-1zM643 330h1v1h-1zM536 372h1v1h-1zM645 533h1v1h-1zM598 194h1v1h-1zM520 523h1v1h-1zM584 404h1v1h-1zM472 576h1v1h-1zM589 497h1v1h-1zM614 277h1v1h-1zM651 322h1v1h-1zM714 360h1v1h-1zM474 363h1v1h-1zM538 649h1v1h-1zM607 336h1v1h-1zM535 498h1v1h-1zM604 588h1v1h-1zM597 233h1v1h-1zM498 405h1v1h-1zM514 556h1v1h-1zM603 456h1v1h-1zM556 298h1v1h-1zM528 124h1v1h-1zM519 251h1v1h-1zM561 618h1v1h-1zM712 422h1v1h-1zM589 284h1v1h-1zM603 360h1v1h-1zM656 170h1v1h-1zM468 494h1v1h-1zM681 252h1v1h-1zM494 300h1v1h-1zM472 440h1v1h-1zM578 216h1v1h-1zM480 374h1v1h-1zM721 303h1v1h-1zM693 409h1v1h-1zM474 401h1v1h-1zM443 428h1v1h-1zM663 285h1v1h-1zM660 539h1v1h-1zM597 120h1v1h-1zM459 504h1v1h-1zM620 145h1v1h-1zM558 666h1v1h-1zM510 199h1v1h-1zM439 374h1v1h-1zM507 444h1v1h-1zM494 516h1v1h-1zM433 269h1v1h-1zM491 161h1v1h-1zM702 452h1v1h-1zM546 521h1v1h-1zM662 239h1v1h-1zM622 261h1v1h-1zM618 430h1v1h-1zM712 257h1v1h-1zM521 628h1v1h-1zM563 122h1v1h-1zM623 339h1v1h-1zM496 283h1v1h-1zM585 520h1v1h-1zM429 408h1v1h-1zM493 539h1v1h-1zM706 337h1v1h-1zM508 567h1v1h-1zM493 145h1v1h-1zM509 346h1v1h-1zM587 565h1v1h-1zM629 365h1v1h-1zM658 480h1v1h-1zM471 313h1v1h-1zM723 350h1v1h-1zM525 414h1v1h-1zM610 567h1v1h-1zM673 494h1v1h-1zM645 381h1v1h-1zM471 283h1v1h-1zM463 169h1v1h-1zM549 495h1v1h-1zM456 536h1v1h-1zM677 292h1v1h-1zM447 408h1v1h-1zM604 533h1v1h-1zM591 590h1v1h-1zM503 656h1v1h-1zM684 396h1v1h-1zM633 194h1v1h-1zM560 272h1v1h-1zM481 387h1v1h-1zM528 611h1v1h-1zM664 359h1v1h-1zM592 311h1v1h-1zM422 355h1v1h-1zM468 417h1v1h-1zM482 290h1v1h-1zM692 445h1v1h-1zM527 455h1v1h-1zM564 228h1v1h-1zM548 347h1v1h-1zM686 264h1v1h-1zM492 347h1v1h-1zM637 235h1v1h-1zM664 298h1v1h-1zM598 218h1v1h-1zM670 482h1v1h-1zM527 322h1v1h-1zM596 261h1v1h-1zM670 449h1v1h-1zM430 425h1v1h-1zM702 468h1v1h-1zM449 318h1v1h-1zM584 579h1v1h-1zM481 136h1v1h-1zM535 228h1v1h-1zM448 304h1v1h-1zM564 458h1v1h-1zM472 217h1v1h-1zM497 391h1v1h-1zM450 205h1v1h-1zM607 321h1v1h-1zM558 355h1v1h-1zM618 243h1v1h-1zM561 379h1v1h-1zM560 512h1v1h-1zM665 465h1v1h-1zM516 312h1v1h-1zM552 181h1v1h-1zM590 160h1v1h-1zM520 665h1v1h-1zM612 555h1v1h-1zM579 375h1v1h-1zM468 258h1v1h-1zM576 307h1v1h-1zM488 362h1v1h-1zM658 525h1v1h-1zM535 338h1v1h-1zM662 182h1v1h-1zM480 304h1v1h-1zM549 127h1v1h-1zM669 261h1v1h-1zM497 327h1v1h-1zM507 382h1v1h-1zM535 426h1v1h-1zM581 123h1v1h-1zM525 488h1v1h-1zM503 359h1v1h-1zM649 193h1v1h-1zM576 570h1v1h-1zM588 355h1v1h-1zM611 510h1v1h-1zM523 236h1v1h-1zM625 508h1v1h-1zM493 379h1v1h-1zM498 338h1v1h-1zM664 228h1v1h-1zM646 489h1v1h-1zM467 564h1v1h-1zM557 484h1v1h-1zM624 414h1v1h-1zM614 175h1v1h-1zM506 124h1v1h-1zM635 479h1v1h-1zM485 527h1v1h-1zM650 516h1v1h-1zM507 592h1v1h-1zM496 573h1v1h-1zM648 276h1v1h-1zM483 452h1v1h-1zM491 440h1v1h-1zM498 234h1v1h-1zM577 448h1v1h-1zM501 487h1v1h-1zM607 309h1v1h-1zM640 504h1v1h-1zM501 456h1v1h-1zM653 307h1v1h-1zM676 383h1v1h-1zM589 110h1v1h-1zM562 415h1v1h-1zM550 617h1v1h-1zM673 204h1v1h-1zM706 248h1v1h-1zM631 172h1v1h-1zM534 270h1v1h-1zM436 447h1v1h-1zM659 408h1v1h-1zM480 427h1v1h-1zM461 321h1v1h-1zM620 376h1v1h-1zM669 248h1v1h-1zM431 348h1v1h-1zM682 226h1v1h-1zM630 325h1v1h-1zM447 242h1v1h-1zM642 148h1v1h-1zM502 416h1v1h-1zM443 484h1v1h-1zM650 549h1v1h-1zM580 472h1v1h-1zM522 189h1v1h-1zM507 434h1v1h-1zM630 293h1v1h-1zM704 277h1v1h-1zM488 218h1v1h-1zM480 491h1v1h-1zM559 218h1v1h-1zM514 479h1v1h-1zM528 259h1v1h-1zM679 306h1v1h-1zM521 647h1v1h-1zM460 215h1v1h-1zM423 339h1v1h-1zM489 194h1v1h-1zM545 159h1v1h-1zM680 332h1v1h-1zM639 207h1v1h-1zM539 279h1v1h-1zM638 353h1v1h-1zM598 172h1v1h-1zM605 287h1v1h-1zM616 300h1v1h-1zM566 442h1v1h-1zM590 466h1v1h-1zM514 395h1v1h-1zM657 250h1v1h-1zM568 669h1v1h-1zM495 586h1v1h-1zM472 477h1v1h-1zM433 458h1v1h-1zM519 502h1v1h-1zM499 173h1v1h-1zM601 546h1v1h-1zM458 240h1v1h-1zM652 393h1v1h-1zM569 631h1v1h-1zM556 255h1v1h-1zM500 222h1v1h-1zM584 333h1v1h-1zM543 382h1v1h-1zM693 298h1v1h-1zM671 527h1v1h-1zM667 394h1v1h-1zM603 183h1v1h-1zM569 580h1v1h-1zM684 420h1v1h-1zM594 394h1v1h-1zM488 551h1v1h-1zM686 434h1v1h-1zM635 520h1v1h-1zM657 205h1v1h-1zM541 173h1v1h-1zM454 423h1v1h-1zM672 416h1v1h-1zM667 509h1v1h-1zM681 488h1v1h-1zM485 274h1v1h-1zM533 581h1v1h-1zM483 581h1v1h-1zM684 502h1v1h-1zM582 603h1v1h-1zM571 264h1v1h-1zM490 117h1v1h-1zM435 285h1v1h-1zM444 498h1v1h-1zM637 464h1v1h-1zM597 407h1v1h-1zM700 239h1v1h-1zM637 223h1v1h-1zM626 352h1v1h-1zM707 307h1v1h-1zM455 524h1v1h-1zM441 254h1v1h-1zM656 333h1v1h-1zM584 272h1v1h-1zM538 411h1v1h-1zM605 430h1v1h-1zM610 229h1v1h-1zM533 596h1v1h-1zM640 287h1v1h-1zM637 437h1v1h-1zM607 162h1v1h-1zM533 528h1v1h-1zM561 110h1v1h-1zM690 351h1v1h-1zM530 304h1v1h-1zM506 109h1v1h-1zM612 350h1v1h-1zM726 360h1v1h-1zM609 388h1v1h-1zM567 174h1v1h-1zM566 366h1v1h-1zM484 317h1v1h-1zM521 133h1v1h-1zM492 226h1v1h-1zM450 352h1v1h-1zM560 134h1v1h-1zM496 600h1v1h-1zM654 503h1v1h-1zM709 373h1v1h-1zM487 398h1v1h-1zM450 395h1v1h-1zM437 299h1v1h-1zM435 396h1v1h-1zM550 560h1v1h-1zM423 368h1v1h-1zM692 215h1v1h-1zM699 397h1v1h-1zM537 464h1v1h-1zM549 144h1v1h-1zM587 482h1v1h-1zM630 246h1v1h-1zM559 155h1v1h-1zM549 205h1v1h-1zM529 391h1v1h-1zM710 296h1v1h-1zM623 389h1v1h-1zM581 197h1v1h-1zM596 297h1v1h-1zM556 167h1v1h-1zM516 545h1v1h-1zM522 567h1v1h-1zM645 564h1v1h-1zM459 183h1v1h-1zM463 227h1v1h-1zM597 246h1v1h-1zM573 111h1v1h-1zM674 319h1v1h-1zM520 598h1v1h-1zM592 368h1v1h-1zM575 417h1v1h-1zM538 622h1v1h-1zM511 371h1v1h-1zM544 300h1v1h-1zM599 575h1v1h-1zM437 332h1v1h-1zM518 582h1v1h-1zM450 512h1v1h-1zM581 150h1v1h-1zM667 215h1v1h-1zM572 536h1v1h-1zM511 324h1v1h-1zM587 250h1v1h-1zM607 139h1v1h-1zM694 486h1v1h-1zM640 182h1v1h-1zM713 283h1v1h-1zM482 566h1v1h-1zM551 333h1v1h-1zM613 578h1v1h-1zM653 370h1v1h-1zM475 349h1v1h-1zM539 101h1v1h-1zM448 191h1v1h-1zM677 277h1v1h-1zM600 600h1v1h-1zM712 396h1v1h-1zM623 566h1v1h-1zM567 206h1v1h-1zM573 280h1v1h-1zM480 124h1v1h-1zM714 270h1v1h-1zM707 348h1v1h-1zM514 465h1v1h-1zM550 113h1v1h-1zM616 364h1v1h-1zM538 439h1v1h-1zM590 183h1v1h-1zM630 494h1v1h-1zM591 340h1v1h-1zM613 471h1v1h-1zM534 214h1v1h-1zM561 556h1v1h-1zM615 216h1v1h-1zM685 184h1v1h-1zM557 581h1v1h-1zM680 516h1v1h-1zM583 530h1v1h-1zM650 234h1v1h-1zM579 461h1v1h-1zM528 281h1v1h-1zM561 645h1v1h-1zM467 376h1v1h-1zM524 349h1v1h-1zM636 411h1v1h-1zM610 254h1v1h-1zM554 101h1v1h-1zM470 145h1v1h-1zM657 450h1v1h-1zM645 428h1v1h-1zM526 554h1v1h-1zM541 257h1v1h-1zM524 378h1v1h-1zM573 559h1v1h-1zM470 299h1v1h-1zM661 345h1v1h-1zM535 670h1v1h-1zM473 269h1v1h-1zM694 310h1v1h-1zM567 604h1v1h-1zM466 204h1v1h-1zM436 360h1v1h-1zM567 102h1v1h-1zM720 335h1v1h-1zM554 450h1v1h-1zM586 301h1v1h-1zM423 395h1v1h-1zM513 409h1v1h-1zM641 368h1v1h-1zM720 384h1v1h-1zM512 492h1v1h-1zM507 334h1v1h-1zM508 669h1v1h-1zM680 460h1v1h-1zM681 446h1v1h-1zM460 550h1v1h-1zM589 450h1v1h-1zM701 263h1v1h-1zM539 189h1v1h-1zM608 125h1v1h-1zM651 180h1v1h-1zM481 206h1v1h-1zM581 434h1v1h-1zM437 314h1v1h-1zM541 550h1v1h-1zM479 540h1v1h-1zM557 394h1v1h-1zM491 494h1v1h-1zM481 232h1v1h-1zM527 403h1v1h-1zM673 404h1v1h-1zM662 160h1v1h-1zM683 373h1v1h-1zM495 561h1v1h-1zM557 472h1v1h-1zM599 560h1v1h-1zM501 371h1v1h-1zM458 469h1v1h-1zM453 165h1v1h-1zM582 259h1v1h-1zM571 132h1v1h-1zM533 446h1v1h-1zM512 514h1v1h-1zM506 579h1v1h-1zM536 153h1v1h-1zM615 192h1v1h-1zM550 285h1v1h-1zM440 417h1v1h-1zM483 503h1v1h-1zM462 360h1v1h-1zM570 469h1v1h-1zM721 291h1v1h-1zM607 241h1v1h-1zM614 592h1v1h-1zM643 249h1v1h-1zM457 291h1v1h-1zM636 160h1v1h-1zM719 314h1v1h-1zM599 275h1v1h-1zM693 276h1v1h-1zM466 464h1v1h-1zM632 380h1v1h-1zM536 131h1v1h-1zM662 439h1v1h-1zM581 293h1v1h-1zM427 293h1v1h-1zM567 318h1v1h-1zM534 659h1v1h-1zM595 512h1v1h-1zM590 538h1v1h-1zM600 473h1v1h-1zM461 274h1v1h-1zM554 192h1v1h-1zM434 242h1v1h-1zM551 656h1v1h-1zM612 152h1v1h-1zM697 421h1v1h-1zM518 534h1v1h-1zM641 300h1v1h-1zM490 463h1v1h-1zM549 311h1v1h-1zM472 324h1v1h-1zM444 455h1v1h-1zM465 516h1v1h-1zM491 417h1v1h-1zM567 658h1v1h-1zM450 176h1v1h-1zM562 568h1v1h-1zM666 194h1v1h-1zM471 507h1v1h-1zM575 232h1v1h-1zM460 308h1v1h-1zM562 343h1v1h-1zM561 592h1v1h-1zM553 549h1v1h-1zM561 285h1v1h-1zM625 582h1v1h-1zM646 417h1v1h-1zM465 431h1v1h-1zM626 437h1v1h-1zM575 615h1v1h-1zM627 215h1v1h-1zM682 408h1v1h-1zM454 492h1v1h-1zM638 391h1v1h-1zM667 170h1v1h-1zM503 151h1v1h-1zM438 436h1v1h-1zM618 288h1v1h-1zM668 332h1v1h-1zM449 363h1v1h-1zM593 381h1v1h-1zM636 584h1v1h-1zM514 614h1v1h-1zM458 414h1v1h-1zM469 190h1v1h-1zM635 340h1v1h-1zM513 300h1v1h-1zM687 341h1v1h-1zM530 362h1v1h-1zM450 220h1v1h-1zM691 457h1v1h-1zM478 247h1v1h-1zM637 544h1v1h-1zM576 493h1v1h-1zM689 240h1v1h-1zM555 503h1v1h-1zM697 343h1v1h-1zM700 287h1v1h-1zM626 472h1v1h-1zM617 402h1v1h-1zM516 285h1v1h-1zM618 328h1v1h-1zM512 229h1v1h-1zM494 184h1v1h-1zM705 409h1v1h-1zM630 151h1v1h-1zM529 177h1v1h-1zM505 537h1v1h-1zM616 455h1v1h-1zM582 172h1v1h-1zM592 145h1v1h-1zM499 194h1v1h-1zM497 669h1v1h-1zM631 140h1v1h-1zM609 443h1v1h-1zM713 445h1v1h-1zM562 308h1v1h-1zM580 364h1v1h-1zM497 270h1v1h-1zM523 157h1v1h-1zM445 292h1v1h-1zM687 203h1v1h-1zM526 589h1v1h-1z" fill="#d8f0ff"/>
<path d="M551.5 89.5L551.5 679.5M604.5 107.5L604.5 610.5M424.5 234.5L424.5 471.5M713.5 232.5L713.5 474.5M412.5 327.5L733.5 404.5M416.5 420.5L727.5 431.5M430.5 491.5L724.5 442.5M453.5 560.5L721.5 449.5" stroke="#c8c850" fill="none"/>
<path d="M550 631h3v1h-3zM550 523h3v1h-3zM550 113h3v1h-3zM550 536h3v1h-3zM550 626h3v1h-3zM550 204h3v1h-3zM550 346h3v1h-3zM550 560h3v1h-3zM550 333h3v1h-3zM550 270h3v1h-3zM550 510h3v1h-3zM550 361h3v1h-3zM550 101h3v1h-3zM550 144h3v1h-3zM550 587h3v1h-3zM550 395h3v1h-3zM550 436h3v1h-3zM550 169h3v1h-3zM550 465h3v1h-3zM550 229h3v1h-3zM550 369h3v1h-3zM550 436h3v1h-3zM550 645h3v1h-3zM550 450h3v1h-3zM550 476h3v1h-3zM550 462h3v1h-3zM550 656h3v1h-3zM550 561h3v1h-3zM550 192h3v1h-3zM550 573h3v1h-3zM550 614h3v1h-3zM550 205h3v1h-3zM550 263h3v1h-3zM550 492h3v1h-3zM550 299h3v1h-3zM550 314h3v1h-3zM550 285h3v1h-3zM550 483h3v1h-3zM550 577h3v1h-3zM550 201h3v1h-3zM550 667h3v1h-3zM550 617h3v1h-3zM550 146h3v1h-3zM550 333h3v1h-3zM550 207h3v1h-3zM550 406h3v1h-3zM550 420h3v1h-3zM550 518h3v1h-3zM550 365h3v1h-3zM550 126h3v1h-3zM550 349h3v1h-3zM550 96h3v1h-3zM550 256h3v1h-3zM550 333h3v1h-3zM550 110h3v1h-3zM550 288h3v1h-3zM550 495h3v1h-3zM550 605h3v1h-3zM550 182h3v1h-3zM550 420h3v1h-3zM550 232h3v1h-3zM550 497h3v1h-3zM550 163h3v1h-3zM550 180h3v1h-3zM550 243h3v1h-3zM550 250h3v1h-3zM550 458h3v1h-3zM550 142h3v1h-3zM550 389h3v1h-3zM550 219h3v1h-3zM550 129h3v1h-3zM550 634h3v1h-3zM550 283h3v1h-3zM550 549h3v1h-3zM550 657h3v1h-3zM550 540h3v1h-3zM550 656h3v1h-3zM550 307h3v1h-3zM550 537h3v1h-3zM550 436h3v1h-3zM550 537h3v1h-3zM550 321h3v1h-3zM550 505h3v1h-3zM550 632h3v1h-3zM550 234h3v1h-3zM550 591h3v1h-3zM550 381h3v1h-3zM550 673h3v1h-3zM550 114h3v1h-3zM550 407h3v1h-3zM550 436h3v1h-3zM550 598h3v1h-3zM550 90h3v1h-3zM550 557h3v1h-3zM550 157h3v1h-3zM550 310h3v1h-3zM603 454h3v1h-3zM603 183h3v1h-3zM603 288h3v1h-3zM603 533h3v1h-3zM603 486h3v1h-3zM603 257h3v1h-3zM603 485h3v1h-3zM603 597h3v1h-3zM603 418h3v1h-3zM603 366h3v1h-3zM603 210h3v1h-3zM603 337h3v1h-3zM603 374h3v1h-3zM603 218h3v1h-3zM603 458h3v1h-3zM603 588h3v1h-3zM603 519h3v1h-3zM603 123h3v1h-3zM603 609h3v1h-3zM603 522h3v1h-3zM603 431h3v1h-3zM603 558h3v1h-3zM603 359h3v1h-3zM603 224h3v1h-3zM603 456h3v1h-3zM603 511h3v1h-3zM603 271h3v1h-3zM603 361h3v1h-3zM603 162h3v1h-3zM603 276h3v1h-3zM603 110h3v1h-3zM603 484h3v1h-3zM603 298h3v1h-3zM603 151h3v1h-3zM603 413h3v1h-3zM603 322h3v1h-3zM603 265h3v1h-3zM603 386h3v1h-3zM603 403h3v1h-3zM603 145h3v1h-3zM603 441h3v1h-3zM603 400h3v1h-3zM603 309h3v1h-3zM603 205h3v1h-3zM603 571h3v1h-3zM603 127h3v1h-3zM603 588h3v1h-3zM603 173h3v1h-3zM603 549h3v1h-3zM603 563h3v1h-3zM603 193h3v1h-3zM603 108h3v1h-3zM603 502h3v1h-3zM603 138h3v1h-3zM603 373h3v1h-3zM603 239h3v1h-3zM603 587h3v1h-3zM603 602h3v1h-3zM603 285h3v1h-3zM603 140h3v1h-3zM603 250h3v1h-3zM603 157h3v1h-3zM603 182h3v1h-3zM603 349h3v1h-3zM603 545h3v1h-3zM603 472h3v1h-3zM603 533h3v1h-3zM603 334h3v1h-3zM603 231h3v1h-3zM603 165h3v1h-3zM603 319h3v1h-3zM603 499h3v1h-3zM603 533h3v1h-3zM603 390h3v1h-3zM603 305h3v1h-3zM603 242h3v1h-3zM603 342h3v1h-3zM603 430h3v1h-3zM603 114h3v1h-3zM603 201h3v1h-3zM603 287h3v1h-3zM603 576h3v1h-3zM423 340h3v1h-3zM423 303h3v1h-3zM423 438h3v1h-3zM423 374h3v1h-3zM423 330h3v1h-3zM423 251h3v1h-3zM423 368h3v1h-3zM423 465h3v1h-3zM423 275h3v1h-3zM423 307h3v1h-3zM423 383h3v1h-3zM423 355h3v1h-3zM423 454h3v1h-3zM423 445h3v1h-3zM423 266h3v1h-3zM423 431h3v1h-3zM423 353h3v1h-3zM423 382h3v1h-3zM423 249h3v1h-3zM423 398h3v1h-3zM423 423h3v1h-3zM423 451h3v1h-3zM423 388h3v1h-3zM423 467h3v1h-3zM423 235h3v1h-3zM423 368h3v1h-3zM423 236h3v1h-3zM423 323h3v1h-3zM423 293h3v1h-3zM423 281h3v1h-3zM423 235h3v1h-3zM423 395h3v1h-3zM423 338h3v1h-3zM423 321h3v1h-3zM423 406h3v1h-3zM423 288h3v1h-3zM423 412h3v1h-3zM423 255h3v1h-3zM712 322h3v1h-3zM712 425h3v1h-3zM712 458h3v1h-3zM712 318h3v1h-3zM712 255h3v1h-3zM712 435h3v1h-3zM712 258h3v1h-3zM712 342h3v1h-3zM712 234h3v1h-3zM712 294h3v1h-3zM712 394h3v1h-3zM712 349h3v1h-3zM712 408h3v1h-3zM712 473h3v1h-3zM712 336h3v1h-3zM712 463h3v1h-3zM712 396h3v1h-3zM712 283h3v1h-3zM712 359h3v1h-3zM712 283h3v1h-3zM712 269h3v1h-3zM712 376h3v1h-3zM712 311h3v1h-3zM712 247h3v1h-3zM712 283h3v1h-3zM712 264h3v1h-3zM712 421h3v1h-3zM712 360h3v1h-3zM712 445h3v1h-3zM712 445h3v1h-3zM712 422h3v1h-3zM712 384h3v1h-3zM712 306h3v1h-3zM712 362h3v1h-3zM712 270h3v1h-3zM712 398h3v1h-3zM712 372h3v1h-3zM712 329h3v1h-3zM712 420h3v1h-3zM712 298h3v1h-3zM631 379h1v3h-1zM464 338h1v3h-1zM686 392h1v3h-1zM547 358h1v3h-1zM606 372h1v3h-1zM542 357h1v3h-1zM552 360h1v3h-1zM478 342h1v3h-1zM619 376h1v3h-1zM436 332h1v3h-1zM699 395h1v3h-1zM701 395h1v3h-1zM632 379h1v3h-1zM662 386h1v3h-1zM424 329h1v3h-1zM491 345h1v3h-1zM646 382h1v3h-1zM533 355h1v3h-1zM657 385h1v3h-1zM451 335h1v3h-1zM493 345h1v3h-1zM452 336h1v3h-1zM527 353h1v3h-1zM522 352h1v3h-1zM589 369h1v3h-1zM579 366h1v3h-1zM681 390h1v3h-1zM564 362h1v3h-1zM700 395h1v3h-1zM670 388h1v3h-1zM511 350h1v3h-1zM454 336h1v3h-1zM567 363h1v3h-1zM571 364h1v3h-1zM606 372h1v3h-1zM620 376h1v3h-1zM412 326h1v3h-1zM644 382h1v3h-1zM470 340h1v3h-1zM632 379h1v3h-1zM437 332h1v3h-1zM710 398h1v3h-1zM632 379h1v3h-1zM435 332h1v3h-1zM592 369h1v3h-1zM496 346h1v3h-1zM714 398h1v3h-1zM507 349h1v3h-1zM721 400h1v3h-1zM631 427h1v3h-1zM485 421h1v3h-1zM676 428h1v3h-1zM588 425h1v3h-1zM714 430h1v3h-1zM665 428h1v3h-1zM453 420h1v3h-1zM454 420h1v3h-1zM495 422h1v3h-1zM499 422h1v3h-1zM616 426h1v3h-1zM645 427h1v3h-1zM515 422h1v3h-1zM659 428h1v3h-1zM686 429h1v3h-1zM551 424h1v3h-1zM481 421h1v3h-1zM568 424h1v3h-1zM514 422h1v3h-1zM606 426h1v3h-1zM706 429h1v3h-1zM457 420h1v3h-1zM700 429h1v3h-1zM416 419h1v3h-1zM727 430h1v3h-1zM690 429h1v3h-1zM624 426h1v3h-1zM539 423h1v3h-1zM619 426h1v3h-1zM436 420h1v3h-1zM566 424h1v3h-1zM562 424h1v3h-1zM726 430h1v3h-1zM467 421h1v3h-1zM474 421h1v3h-1zM513 422h1v3h-1zM429 419h1v3h-1zM656 427h1v3h-1zM593 425h1v3h-1zM441 420h1v3h-1zM518 423h1v3h-1zM533 423h1v3h-1zM673 428h1v3h-1zM578 425h1v3h-1zM600 425h1v3h-1zM645 427h1v3h-1zM535 423h1v3h-1zM450 420h1v3h-1zM634 427h1v3h-1zM655 453h1v3h-1zM488 480h1v3h-1zM526 474h1v3h-1zM545 471h1v3h-1zM615 459h1v3h-1zM620 458h1v3h-1zM514 476h1v3h-1zM607 461h1v3h-1zM640 455h1v3h-1zM485 481h1v3h-1zM681 448h1v3h-1zM555 469h1v3h-1zM659 452h1v3h-1zM713 443h1v3h-1zM671 450h1v3h-1zM669 450h1v3h-1zM569 467h1v3h-1zM448 487h1v3h-1zM530 473h1v3h-1zM588 464h1v3h-1zM431 490h1v3h-1zM571 467h1v3h-1zM471 483h1v3h-1zM625 457h1v3h-1zM683 448h1v3h-1zM491 480h1v3h-1zM461 485h1v3h-1zM455 486h1v3h-1zM476 482h1v3h-1zM519 475h1v3h-1zM559 469h1v3h-1zM590 463h1v3h-1zM712 443h1v3h-1zM579 465h1v3h-1zM593 463h1v3h-1zM443 488h1v3h-1zM722 441h1v3h-1zM500 478h1v3h-1zM702 445h1v3h-1zM540 472h1v3h-1zM647 454h1v3h-1zM695 446h1v3h-1zM511 477h1v3h-1zM602 461h1v3h-1zM633 456h1v3h-1zM692 446h1v3h-1zM562 514h1v3h-1zM546 520h1v3h-1zM715 451h1v3h-1zM613 493h1v3h-1zM518 532h1v3h-1zM544 521h1v3h-1zM707 454h1v3h-1zM690 461h1v3h-1zM506 537h1v3h-1zM474 550h1v3h-1zM702 456h1v3h-1zM472 551h1v3h-1zM533 526h1v3h-1zM484 546h1v3h-1zM576 508h1v3h-1zM578 507h1v3h-1zM602 497h1v3h-1zM616 491h1v3h-1zM694 459h1v3h-1zM633 484h1v3h-1zM661 473h1v3h-1zM685 463h1v3h-1zM518 532h1v3h-1zM496 541h1v3h-1zM454 559h1v3h-1zM453 559h1v3h-1zM680 465h1v3h-1zM672 468h1v3h-1zM559 515h1v3h-1zM626 488h1v3h-1zM591 502h1v3h-1zM514 534h1v3h-1zM600 498h1v3h-1zM463 555h1v3h-1zM640 482h1v3h-1zM546 520h1v3h-1zM648 478h1v3h-1zM505 537h1v3h-1zM667 470h1v3h-1zM491 543h1v3h-1zM655 476h1v3h-1zM473 551h1v3h-1zM531 527h1v3h-1zM577 508h1v3h-1zM550 93h3v1h-3zM550 106h3v1h-3zM550 117h3v1h-3zM550 124h3v1h-3zM550 131h3v1h-3zM550 143h3v1h-3zM550 148h3v1h-3zM550 160h3v1h-3zM550 172h3v1h-3zM550 180h3v1h-3zM550 187h3v1h-3zM550 194h3v1h-3zM550 201h3v1h-3zM550 209h3v1h-3zM550 218h3v1h-3zM550 228h3v1h-3zM550 242h3v1h-3zM550 254h3v1h-3zM550 264h3v1h-3zM550 278h3v1h-3zM550 284h3v1h-3zM550 290h3v1h-3zM550 300h3v1h-3zM550 304h3v1h-3zM550 308h3v1h-3zM550 318h3v1h-3zM550 326h3v1h-3zM550 339h3v1h-3zM550 350h3v1h-3zM550 359h3v1h-3zM550 368h3v1h-3zM550 374h3v1h-3zM550 378h3v1h-3zM550 384h3v1h-3zM550 395h3v1h-3zM550 401h3v1h-3zM550 409h3v1h-3zM550 413h3v1h-3zM550 425h3v1h-3zM550 431h3v1h-3zM550 438h3v1h-3zM550 450h3v1h-3zM550 459h3v1h-3zM550 472h3v1h-3zM550 482h3v1h-3zM550 494h3v1h-3zM550 499h3v1h-3zM550 508h3v1h-3zM550 517h3v1h-3zM550 530h3v1h-3zM550 537h3v1h-3zM550 547h3v1h-3zM550 552h3v1h-3zM550 560h3v1h-3zM550 567h3v1h-3zM550 573h3v1h-3zM550 585h3v1h-3zM550 593h3v1h-3zM550 606h3v1h-3zM550 616h3v1h-3zM550 626h3v1h-3zM550 637h3v1h-3zM550 647h3v1h-3zM550 653h3v1h-3zM550 661h3v1h-3zM550 668h3v1h-3zM550 676h3v1h-3zM603 113h3v1h-3zM603 119h3v1h-3zM603 130h3v1h-3zM603 137h3v1h-3zM603 149h3v1h-3zM603 160h3v1h-3zM603 165h3v1h-3zM603 178h3v1h-3zM603 191h3v1h-3zM603 204h3v1h-3zM603 214h3v1h-3zM603 219h3v1h-3zM603 225h3v1h-3zM603 239h3v1h-3zM603 248h3v1h-3zM603 254h3v1h-3zM603 267h3v1h-3zM603 277h3v1h-3zM603 287h3v1h-3zM603 295h3v1h-3zM603 303h3v1h-3zM603 309h3v1h-3zM603 314h3v1h-3zM603 326h3v1h-3zM603 335h3v1h-3zM603 344h3v1h-3zM603 352h3v1h-3zM603 363h3v1h-3zM603 367h3v1h-3zM603 375h3v1h-3zM603 380h3v1h-3zM603 385h3v1h-3zM603 398h3v1h-3zM603 409h3v1h-3zM603 417h3v1h-3zM603 427h3v1h-3zM603 439h3v1h-3zM603 447h3v1h-3zM603 457h3v1h-3zM603 467h3v1h-3zM603 475h3v1h-3zM603 484h3v1h-3zM603 496h3v1h-3zM603 509h3v1h-3zM603 514h3v1h-3zM603 528h3v1h-3zM603 532h3v1h-3zM603 543h3v1h-3zM603 555h3v1h-3zM603 561h3v1h-3zM603 569h3v1h-3zM603 581h3v1h-3zM603 585h3v1h-3zM603 596h3v1h-3zM603 608h3v1h-3zM423 238h3v1h-3zM423 245h3v1h-3zM423 251h3v1h-3zM423 258h3v1h-3zM423 264h3v1h-3zM423 271h3v1h-3zM423 285h3v1h-3zM423 295h3v1h-3zM423 302h3v1h-3zM423 309h3v1h-3zM423 322h3v1h-3zM423 331h3v1h-3zM423 345h3v1h-3zM423 354h3v1h-3zM423 363h3v1h-3zM423 376h3v1h-3zM423 387h3v1h-3zM423 397h3v1h-3zM423 405h3v1h-3zM423 418h3v1h-3zM423 426h3v1h-3zM423 440h3v1h-3zM423 444h3v1h-3zM423 453h3v1h-3zM423 462h3v1h-3zM712 234h3v1h-3zM712 246h3v1h-3zM712 256h3v1h-3zM712 268h3v1h-3zM712 278h3v1h-3zM712 292h3v1h-3zM712 299h3v1h-3zM712 307h3v1h-3zM712 313h3v1h-3zM712 317h3v1h-3zM712 323h3v1h-3zM712 337h3v1h-3zM712 349h3v1h-3zM712 354h3v1h-3zM712 364h3v1h-3zM712 373h3v1h-3zM712 383h3v1h-3zM712 394h3v1h-3zM712 401h3v1h-3zM712 414h3v1h-3zM712 423h3v1h-3zM712 433h3v1h-3zM712 444h3v1h-3zM712 449h3v1h-3zM712 454h3v1h-3zM712 462h3v1h-3zM712 474h3v1h-3zM416 327h1v3h-1zM421 328h1v3h-1zM434 331h1v3h-1zM446 334h1v3h-1zM458 337h1v3h-1zM467 339h1v3h-1zM480 342h1v3h-1zM484 343h1v3h-1zM488 344h1v3h-1zM493 345h1v3h-1zM499 347h1v3h-1zM505 348h1v3h-1zM511 350h1v3h-1zM520 352h1v3h-1zM525 353h1v3h-1zM534 355h1v3h-1zM540 357h1v3h-1zM550 359h1v3h-1zM554 360h1v3h-1zM561 362h1v3h-1zM574 365h1v3h-1zM583 367h1v3h-1zM595 370h1v3h-1zM605 372h1v3h-1zM615 375h1v3h-1zM621 376h1v3h-1zM630 378h1v3h-1zM635 379h1v3h-1zM646 382h1v3h-1zM660 385h1v3h-1zM672 388h1v3h-1zM676 389h1v3h-1zM683 391h1v3h-1zM690 393h1v3h-1zM695 394h1v3h-1zM705 396h1v3h-1zM717 399h1v3h-1zM724 401h1v3h-1zM421 419h1v3h-1zM426 419h1v3h-1zM438 420h1v3h-1zM451 420h1v3h-1zM457 420h1v3h-1zM466 421h1v3h-1zM477 421h1v3h-1zM487 422h1v3h-1zM492 422h1v3h-1zM502 422h1v3h-1zM513 422h1v3h-1zM525 423h1v3h-1zM537 423h1v3h-1zM544 424h1v3h-1zM555 424h1v3h-1zM568 424h1v3h-1zM581 425h1v3h-1zM587 425h1v3h-1zM591 425h1v3h-1zM601 426h1v3h-1zM607 426h1v3h-1zM617 426h1v3h-1zM631 427h1v3h-1zM638 427h1v3h-1zM645 427h1v3h-1zM653 427h1v3h-1zM664 428h1v3h-1zM669 428h1v3h-1zM677 428h1v3h-1zM682 428h1v3h-1zM693 429h1v3h-1zM705 429h1v3h-1zM713 429h1v3h-1zM720 430h1v3h-1zM431 490h1v3h-1zM438 489h1v3h-1zM445 488h1v3h-1zM453 486h1v3h-1zM458 485h1v3h-1zM469 483h1v3h-1zM479 482h1v3h-1zM486 481h1v3h-1zM491 480h1v3h-1zM502 478h1v3h-1zM507 477h1v3h-1zM513 476h1v3h-1zM518 475h1v3h-1zM523 475h1v3h-1zM536 472h1v3h-1zM542 471h1v3h-1zM549 470h1v3h-1zM561 468h1v3h-1zM571 466h1v3h-1zM577 465h1v3h-1zM585 464h1v3h-1zM598 462h1v3h-1zM606 461h1v3h-1zM617 459h1v3h-1zM622 458h1v3h-1zM633 456h1v3h-1zM644 454h1v3h-1zM656 452h1v3h-1zM667 451h1v3h-1zM675 449h1v3h-1zM679 448h1v3h-1zM688 447h1v3h-1zM700 445h1v3h-1zM705 444h1v3h-1zM712 443h1v3h-1zM721 441h1v3h-1zM458 557h1v3h-1zM463 555h1v3h-1zM468 553h1v3h-1zM479 548h1v3h-1zM489 544h1v3h-1zM499 540h1v3h-1zM512 534h1v3h-1zM525 529h1v3h-1zM536 525h1v3h-1zM547 520h1v3h-1zM554 517h1v3h-1zM564 513h1v3h-1zM569 511h1v3h-1zM580 506h1v3h-1zM591 502h1v3h-1zM601 498h1v3h-1zM609 494h1v3h-1zM616 491h1v3h-1zM624 488h1v3h-1zM628 487h1v3h-1zM639 482h1v3h-1zM648 478h1v3h-1zM655 475h1v3h-1zM664 472h1v3h-1zM674 467h1v3h-1zM681 464h1v3h-1zM693 460h1v3h-1zM705 455h1v3h-1zM712 452h1v3h-1zM717 450h1v3h-1z" fill="#c8c850"/>
<path d="M500 95h3v1h-3zM499 96h5v1h-5zM500 97h3v1h-3zM530 88h3v1h-3zM529 89h5v1h-5zM530 90h3v1h-3zM563 89h3v1h-3zM562 90h5v1h-5zM563 91h3v1h-3zM592 99h3v1h-3zM591 100h5v1h-5zM592 101h3v1h-3zM620 119h3v1h-3zM619 120h5v1h-5zM620 121h3v1h-3zM643 135h3v1h-3zM642 136h5v1h-5zM643 137h3v1h-3zM665 151h3v1h-3zM664 152h5v1h-5zM665 153h3v1h-3zM671 157h3v1h-3zM670 158h5v1h-5zM671 159h3v1h-3zM684 169h3v1h-3zM683 170h5v1h-5zM684 171h3v1h-3zM697 203h3v1h-3zM696 204h5v1h-5zM697 205h3v1h-3zM701 211h3v1h-3zM700 212h5v1h-5zM701 213h3v1h-3zM707 223h3v1h-3zM706 224h5v1h-5zM707 225h3v1h-3zM712 235h3v1h-3zM711 236h5v1h-5zM712 237h3v1h-3zM717 248h3v1h-3zM716 249h5v1h-5zM717 250h3v1h-3zM721 260h3v1h-3zM720 261h5v1h-5zM721 262h3v1h-3zM725 273h3v1h-3zM724 274h5v1h-5zM725 275h3v1h-3zM728 286h3v1h-3zM727 287h5v1h-5zM728 288h3v1h-3zM731 299h3v1h-3zM730 300h5v1h-5zM731 301h3v1h-3zM733 312h3v1h-3zM732 313h5v1h-5zM733 314h3v1h-3zM734 325h3v1h-3zM733 326h5v1h-5zM734 327h3v1h-3zM735 338h3v1h-3zM734 339h5v1h-5zM735 340h3v1h-3zM735 352h3v1h-3zM734 353h5v1h-5zM735 354h3v1h-3zM735 365h3v1h-3zM734 366h5v1h-5zM735 367h3v1h-3zM731 404h3v1h-3zM730 405h5v1h-5zM731 406h3v1h-3zM722 443h3v1h-3zM721 444h5v1h-5zM722 445h3v1h-3zM718 456h3v1h-3zM717 457h5v1h-5zM718 458h3v1h-3zM713 468h3v1h-3zM712 469h5v1h-5zM713 470h3v1h-3zM708 480h3v1h-3zM707 481h5v1h-5zM708 482h3v1h-3zM679 531h3v1h-3zM678 532h5v1h-5zM679 533h3v1h-3zM672 542h3v1h-3zM671 543h5v1h-5zM672 544h3v1h-3zM660 555h3v1h-3zM659 556h5v1h-5zM660 557h3v1h-3zM648 568h3v1h-3zM647 569h5v1h-5zM648 570h3v1h-3zM644 591h3v1h-3zM643 592h5v1h-5zM644 593h3v1h-3zM626 592h3v1h-3zM625 593h5v1h-5zM626 594h3v1h-3zM606 606h3v1h-3zM605 607h5v1h-5zM606 608h3v1h-3zM590 611h3v1h-3zM589 612h5v1h-5zM590 613h3v1h-3zM581 619h3v1h-3zM580 620h5v1h-5zM581 621h3v1h-3zM486 609h3v1h-3zM485 610h5v1h-5zM486 611h3v1h-3zM496 611h3v1h-3zM495 612h5v1h-5zM496 613h3v1h-3zM503 619h3v1h-3zM502 620h5v1h-5zM503 621h3v1h-3zM504 632h3v1h-3zM503 633h5v1h-5zM504 634h3v1h-3zM504 637h3v1h-3zM503 638h5v1h-5zM504 639h3v1h-3zM506 652h3v1h-3zM505 653h5v1h-5zM506 654h3v1h-3zM505 660h3v1h-3zM504 661h5v1h-5zM505 662h3v1h-3zM503 666h3v1h-3zM502 667h5v1h-5zM503 668h3v1h-3zM508 670h3v1h-3zM507 671h5v1h-5zM508 672h3v1h-3zM522 670h3v1h-3zM521 671h5v1h-5zM522 672h3v1h-3zM530 654h3v1h-3zM529 655h5v1h-5zM530 656h3v1h-3zM489 674h3v1h-3zM488 675h5v1h-5zM489 676h3v1h-3zM497 674h3v1h-3zM496 675h5v1h-5zM497 676h3v1h-3zM582 611h3v1h-3zM581 612h5v1h-5zM582 613h3v1h-3zM581 618h3v1h-3zM580 619h5v1h-5zM581 620h3v1h-3zM580 625h3v1h-3zM579 626h5v1h-5zM580 627h3v1h-3zM579 634h3v1h-3zM578 635h5v1h-5zM579 636h3v1h-3zM578 649h3v1h-3zM577 650h5v1h-5zM578 651h3v1h-3zM577 655h3v1h-3zM576 656h5v1h-5zM577 657h3v1h-3zM580 664h3v1h-3zM579 665h5v1h-5zM580 666h3v1h-3zM567 665h3v1h-3zM566 666h5v1h-5zM567 667h3v1h-3zM567 669h3v1h-3zM566 670h5v1h-5zM567 671h3v1h-3zM576 670h3v1h-3zM575 671h5v1h-5zM576 672h3v1h-3zM588 675h3v1h-3zM587 676h5v1h-5zM588 677h3v1h-3zM595 675h3v1h-3zM594 676h5v1h-5zM595 677h3v1h-3zM459 133h3v1h-3zM458 134h5v1h-5zM459 135h3v1h-3zM449 152h3v1h-3zM448 153h5v1h-5zM449 154h3v1h-3zM440 177h3v1h-3zM439 178h5v1h-5zM440 179h3v1h-3zM430 201h3v1h-3zM429 202h5v1h-5zM430 203h3v1h-3z" fill="#b880b8"/>
<path d="M471 112h1v1h-1zM473 112h1v1h-1zM472 113h1v1h-1zM471 114h1v1h-1zM473 114h1v1h-1zM530 87h1v1h-1zM532 87h1v1h-1zM531 88h1v1h-1zM530 89h1v1h-1zM532 89h1v1h-1zM645 135h1v1h-1zM647 135h1v1h-1zM646 136h1v1h-1zM645 137h1v1h-1zM647 137h1v1h-1zM658 145h1v1h-1zM660 145h1v1h-1zM659 146h1v1h-1zM658 147h1v1h-1zM660 147h1v1h-1zM674 159h1v1h-1zM676 159h1v1h-1zM675 160h1v1h-1zM674 161h1v1h-1zM676 161h1v1h-1zM690 173h1v1h-1zM692 173h1v1h-1zM691 174h1v1h-1zM690 175h1v1h-1zM692 175h1v1h-1zM699 203h1v1h-1zM701 203h1v1h-1zM700 204h1v1h-1zM699 205h1v1h-1zM701 205h1v1h-1zM711 231h1v1h-1zM713 231h1v1h-1zM712 232h1v1h-1zM711 233h1v1h-1zM713 233h1v1h-1zM722 260h1v1h-1zM724 260h1v1h-1zM723 261h1v1h-1zM722 262h1v1h-1zM724 262h1v1h-1zM731 294h1v1h-1zM733 294h1v1h-1zM732 295h1v1h-1zM731 296h1v1h-1zM733 296h1v1h-1zM735 326h1v1h-1zM737 326h1v1h-1zM736 327h1v1h-1zM735 328h1v1h-1zM737 328h1v1h-1zM736 356h1v1h-1zM738 356h1v1h-1zM737 357h1v1h-1zM736 358h1v1h-1zM738 358h1v1h-1zM732 403h1v1h-1zM734 403h1v1h-1zM733 404h1v1h-1zM732 405h1v1h-1zM734 405h1v1h-1zM712 473h1v1h-1zM714 473h1v1h-1zM713 474h1v1h-1zM712 475h1v1h-1zM714 475h1v1h-1zM709 480h1v1h-1zM711 480h1v1h-1zM710 481h1v1h-1zM709 482h1v1h-1zM711 482h1v1h-1zM692 512h1v1h-1zM694 512h1v1h-1zM693 513h1v1h-1zM692 514h1v1h-1zM694 514h1v1h-1zM672 542h1v1h-1zM674 542h1v1h-1zM673 543h1v1h-1zM672 544h1v1h-1zM674 544h1v1h-1zM658 561h1v1h-1zM660 561h1v1h-1zM659 562h1v1h-1zM658 563h1v1h-1zM660 563h1v1h-1zM645 578h1v1h-1zM647 578h1v1h-1zM646 579h1v1h-1zM645 580h1v1h-1zM647 580h1v1h-1zM645 591h1v1h-1zM647 591h1v1h-1zM646 592h1v1h-1zM645 593h1v1h-1zM647 593h1v1h-1zM629 592h1v1h-1zM631 592h1v1h-1zM630 593h1v1h-1zM629 594h1v1h-1zM631 594h1v1h-1zM610 606h1v1h-1zM612 606h1v1h-1zM611 607h1v1h-1zM610 608h1v1h-1zM612 608h1v1h-1zM581 621h1v1h-1zM583 621h1v1h-1zM582 622h1v1h-1zM581 623h1v1h-1zM583 623h1v1h-1zM579 631h1v1h-1zM581 631h1v1h-1zM580 632h1v1h-1zM579 633h1v1h-1zM581 633h1v1h-1zM591 646h1v1h-1zM593 646h1v1h-1zM592 647h1v1h-1zM591 648h1v1h-1zM593 648h1v1h-1zM599 646h1v1h-1zM601 646h1v1h-1zM600 647h1v1h-1zM599 648h1v1h-1zM601 648h1v1h-1zM599 662h1v1h-1zM601 662h1v1h-1zM600 663h1v1h-1zM599 664h1v1h-1zM601 664h1v1h-1zM599 678h1v1h-1zM601 678h1v1h-1zM600 679h1v1h-1zM599 680h1v1h-1zM601 680h1v1h-1zM591 678h1v1h-1zM593 678h1v1h-1zM592 679h1v1h-1zM591 680h1v1h-1zM593 680h1v1h-1zM561 678h1v1h-1zM563 678h1v1h-1zM562 679h1v1h-1zM561 680h1v1h-1zM563 680h1v1h-1zM550 678h1v1h-1zM552 678h1v1h-1zM551 679h1v1h-1zM550 680h1v1h-1zM552 680h1v1h-1zM542 678h1v1h-1zM544 678h1v1h-1zM543 679h1v1h-1zM542 680h1v1h-1zM544 680h1v1h-1zM523 678h1v1h-1zM525 678h1v1h-1zM524 679h1v1h-1zM523 680h1v1h-1zM525 680h1v1h-1zM492 678h1v1h-1zM494 678h1v1h-1zM493 679h1v1h-1zM492 680h1v1h-1zM494 680h1v1h-1zM485 678h1v1h-1zM487 678h1v1h-1zM486 679h1v1h-1zM485 680h1v1h-1zM487 680h1v1h-1zM485 662h1v1h-1zM487 662h1v1h-1zM486 663h1v1h-1zM485 664h1v1h-1zM487 664h1v1h-1zM485 646h1v1h-1zM487 646h1v1h-1zM486 647h1v1h-1zM485 648h1v1h-1zM487 648h1v1h-1zM502 640h1v1h-1zM504 640h1v1h-1zM503 641h1v1h-1zM502 642h1v1h-1zM504 642h1v1h-1zM505 626h1v1h-1zM507 626h1v1h-1zM506 627h1v1h-1zM505 628h1v1h-1zM507 628h1v1h-1zM431 498h1v1h-1zM433 498h1v1h-1zM432 499h1v1h-1zM431 500h1v1h-1zM433 500h1v1h-1zM438 521h1v1h-1zM440 521h1v1h-1zM439 522h1v1h-1zM438 523h1v1h-1zM440 523h1v1h-1zM446 544h1v1h-1zM448 544h1v1h-1zM447 545h1v1h-1zM446 546h1v1h-1zM448 546h1v1h-1zM452 559h1v1h-1zM454 559h1v1h-1zM453 560h1v1h-1zM452 561h1v1h-1zM454 561h1v1h-1zM458 574h1v1h-1zM460 574h1v1h-1zM459 575h1v1h-1zM458 576h1v1h-1zM460 576h1v1h-1zM467 594h1v1h-1zM469 594h1v1h-1zM468 595h1v1h-1zM467 596h1v1h-1zM469 596h1v1h-1zM467 613h1v1h-1zM469 613h1v1h-1zM468 614h1v1h-1zM467 615h1v1h-1zM469 615h1v1h-1zM432 195h1v1h-1zM434 195h1v1h-1zM433 196h1v1h-1zM432 197h1v1h-1zM434 197h1v1h-1zM425 219h1v1h-1zM427 219h1v1h-1zM426 220h1v1h-1zM425 221h1v1h-1zM427 221h1v1h-1zM420 250h1v1h-1zM422 250h1v1h-1zM421 251h1v1h-1zM420 252h1v1h-1zM422 252h1v1h-1zM417 278h1v1h-1zM419 278h1v1h-1zM418 279h1v1h-1zM417 280h1v1h-1zM419 280h1v1h-1zM412 309h1v1h-1zM414 309h1v1h-1zM413 310h1v1h-1zM412 311h1v1h-1zM414 311h1v1h-1zM411 326h1v1h-1zM413 326h1v1h-1zM412 327h1v1h-1zM411 328h1v1h-1zM413 328h1v1h-1zM410 341h1v1h-1zM412 341h1v1h-1zM411 342h1v1h-1zM410 343h1v1h-1zM412 343h1v1h-1zM410 372h1v1h-1zM412 372h1v1h-1zM411 373h1v1h-1zM410 374h1v1h-1zM412 374h1v1h-1zM412 402h1v1h-1zM414 402h1v1h-1zM413 403h1v1h-1zM412 404h1v1h-1zM414 404h1v1h-1zM415 419h1v1h-1zM417 419h1v1h-1zM416 420h1v1h-1zM415 421h1v1h-1zM417 421h1v1h-1zM416 437h1v1h-1zM418 437h1v1h-1zM417 438h1v1h-1zM416 439h1v1h-1zM418 439h1v1h-1zM429 490h1v1h-1zM431 490h1v1h-1zM430 491h1v1h-1zM429 492h1v1h-1zM431 492h1v1h-1zM452 141h1v1h-1zM454 141h1v1h-1zM453 142h1v1h-1zM452 143h1v1h-1zM454 143h1v1h-1zM441 167h1v1h-1zM443 167h1v1h-1zM442 168h1v1h-1zM441 169h1v1h-1zM443 169h1v1h-1z" fill="#f0e020"/>
</svg>
<div class="t" style="left:449px;top:6px;color:#ff5555">Plasma isoflux</div>
<div class="t" style="left:449px;top:21px;color:#ffffff">#7<b>0</b>199 at 4<b>0</b>.<b>0</b><b>0</b><b>0</b><b>0</b><b>0</b><b>0</b>s</div>
<div class="t" style="left:864px;top:126px;color:#00ff00">RAXIS=<b>0</b>.<b>0</b><b>0</b><b>0</b></div>
<div class="t" style="left:864px;top:156px;color:#00ff00">ZAXIS=<b>0</b>.<b>0</b><b>0</b><b>0</b></div>
<div class="t" style="left:864px;top:171px;color:#80f0f0">[ XLOC ]:</div>
<div class="t" style="left:864px;top:186px;color:#80f0f0">Ip=-1.<b>0</b>68862e+<b>0</b>3</div>
<div class="t" style="left:864px;top:201px;color:#80f0f0">psi_b=<b>0</b>.<b>0</b><b>0</b><b>0</b></div>
<div class="t" style="left:864px;top:216px;color:#80f0f0">psi_s=<b>0</b>.<b>0</b><b>0</b><b>0</b></div>
<div class="t" style="left:864px;top:231px;color:#80f0f0">psi_u=<b>0</b>.<b>0</b><b>0</b><b>0</b></div>
<div class="t" style="left:864px;top:246px;color:#80f0f0">RX=<b>0</b>.<b>0</b><b>0</b><b>0</b></div>
<div class="t" style="left:864px;top:261px;color:#80f0f0">ZX=<b>0</b>.<b>0</b><b>0</b><b>0</b></div>
<div class="t" style="left:864px;top:276px;color:#80f0f0">RXU=<b>0</b>.<b>0</b><b>0</b><b>0</b></div>
<div class="t" style="left:864px;top:291px;color:#80f0f0">ZXU=<b>0</b>.<b>0</b><b>0</b><b>0</b></div>
<div class="t" style="left:864px;top:321px;color:#00ff00">[ EFIT ]:</div>
<div class="t" style="left:864px;top:336px;color:#00ff00">PSIA=<b>0</b>.<b>0</b><b>0</b><b>0</b></div>
<div class="t" style="left:864px;top:351px;color:#00ff00">PSIB=<b>0</b>.<b>0</b><b>0</b><b>0</b></div>
<div class="t" style="left:864px;top:366px;color:#00ff00">|PSIA-PSIB|=<b>0</b>.<b>0</b><b>0</b><b>0</b></div>
<div class="t" style="left:864px;top:396px;color:#00ff00">QAX=<b>0</b>.<b>0</b><b>0</b><b>0</b></div>
<div class="t" style="left:864px;top:426px;color:#00ff00">Q95=<b>0</b>.<b>0</b><b>0</b><b>0</b></div>
<div class="t" style="left:864px;top:456px;color:#00ff00">BETAP=<b>0</b>.<b>0</b><b>0</b><b>0</b></div>
<div class="t" style="left:864px;top:486px;color:#00ff00">LI=<b>0</b>.<b>0</b><b>0</b><b>0</b><b>0</b><b>0</b><b>0</b></div>
<div class="t" style="left:894px;top:306px;color:#80f0f0">XL</div>
<div class="t" style="left:864px;top:696px;color:#dc8a8a">NEVL=<b>0</b>.<b>0</b><b>0</b><b>0</b>e+<b>0</b><b>0</b></div>
<div class="t" style="left:864px;top:726px;color:#00ff00">PAX=<b>0</b>.<b>0</b><b>0</b><b>0</b>e+<b>0</b><b>0</b></div>
<div class="t" style="left:12px;top:78px;color:#66cce4">2.<b>0</b></div>
<div class="t" style="left:12px;top:156px;color:#66cce4">1.5</div>
<div class="t" style="left:12px;top:234px;color:#66cce4">1.<b>0</b></div>
<div class="t" style="left:12px;top:312px;color:#66cce4"><b>0</b>.5</div>
<div class="t" style="left:12px;top:390px;color:#66cce4"><b>0</b>.<b>0</b></div>
<div class="t" style="left:12px;top:468px;color:#66cce4">-<b>0</b>.5</div>
<div class="t" style="left:12px;top:546px;color:#66cce4">-1.<b>0</b></div>
<div class="t" style="left:12px;top:624px;color:#66cce4">-1.5</div>
<div class="t" style="left:12px;top:702px;color:#66cce4">-2.<b>0</b></div>
<div class="t" style="left:129px;top:742px;color:#66cce4"><b>0</b>.<b>0</b></div>
<div class="t" style="left:207px;top:742px;color:#66cce4"><b>0</b>.5</div>
<div class="t" style="left:285px;top:742px;color:#66cce4">1.<b>0</b></div>
<div class="t" style="left:363px;top:742px;color:#66cce4">1.5</div>
<div class="t" style="left:441px;top:742px;color:#66cce4">2.<b>0</b></div>
<div class="t" style="left:519px;top:742px;color:#66cce4">2.5</div>
<div class="t" style="left:597px;top:742px;color:#66cce4">3.<b>0</b></div>
<div class="t" style="left:675px;top:742px;color:#66cce4">3.5</div>
<div class="t" style="left:753px;top:742px;color:#66cce4">4.<b>0</b></div>
<div class="t" style="left:831px;top:742px;color:#66cce4">4.5</div>
<div class="t" style="left:909px;top:742px;color:#66cce4">5.<b>0</b></div>
<div class="t" style="left:51px;top:8px;color:#66cce4">z</div>
<div class="t" style="left:1004px;top:725px;color:#66cce4">r</div>
</body></html>
